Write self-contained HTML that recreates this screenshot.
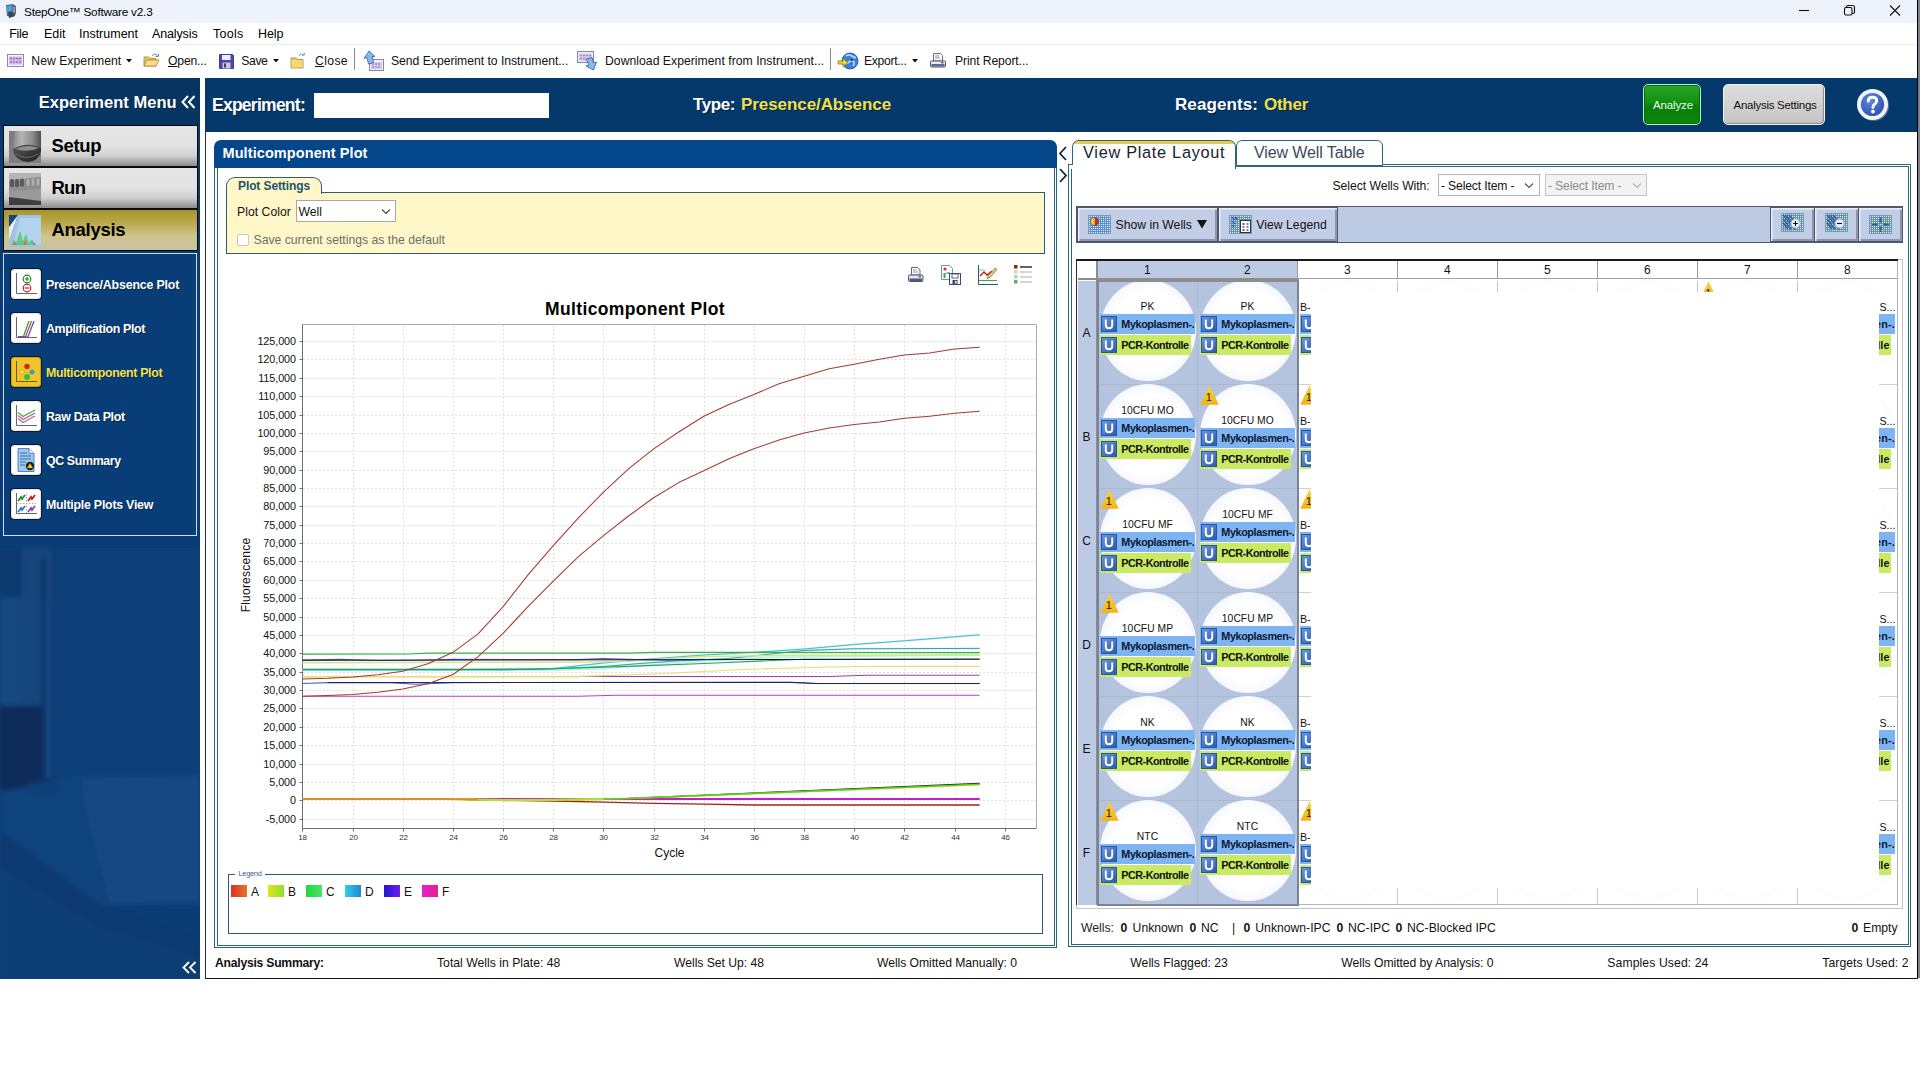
<!DOCTYPE html><html><head><meta charset="utf-8"><title>StepOne Software v2.3</title><style>*{box-sizing:border-box;margin:0;padding:0}
html,body{width:1920px;height:1080px;background:#fff;overflow:hidden}
body{font-family:"Liberation Sans",sans-serif;font-size:12px;color:#000;position:relative}
.a{position:absolute}
.t{position:absolute;white-space:nowrap}
svg{position:absolute;overflow:visible}
#titlebar{left:0;top:0;width:1917px;height:23px;background:#eef2fa}
#menubar{left:0;top:23px;width:1917px;height:22px;background:#fff;border-bottom:1px solid #ececec}
#toolbar{left:0;top:45px;width:1917px;height:33px;background:#fff}
#winR{left:1917px;top:0;width:1px;height:979px;background:#000}
#winR2{left:1918px;top:0;width:2px;height:978px;background:#7d8290}
#winB{left:205px;top:978px;width:1713px;height:1px;background:#111}
#left{left:0;top:78px;width:200px;height:901px;background:#0a3b70;overflow:hidden}
#band{left:205px;top:78px;width:1712px;height:54px;background:#05386b}
.navbtn{left:2.5px;width:195px;height:42px;border:1px solid #0a0a0a;background:linear-gradient(#e6e6e6 0%,#e3e3e3 50%,#cfcfcf 75%,#8a8a8a 100%)}
.navbtn.sel{background:linear-gradient(#a8952e 0%,#b8a748 30%,#cfc48c 65%,#c9c3a6 100%)}
.sh{text-shadow:1px 1px 0 rgba(0,0,0,.38)}
#mainL{left:205px;top:132px;width:1px;height:847px;background:#22303c}
</style></head><body>
<div class="a" id="titlebar"></div><div class="a" id="menubar"></div><div class="a" id="toolbar"></div>
<svg style="left:4px;top:3px" width="14" height="16" viewBox="0 0 14 16"><path d="M2 2 L9 1 L12 3 L12 11 L9 14 L3 13 Z" fill="#5a6a80"/><path d="M3 3 L8 2.5 L8 8 L3 8.5Z" fill="#4aa0e0"/><path d="M4 9 L10 9 L11 13 L5 15Z" fill="#3a4658"/><rect x="9" y="4" width="2" height="6" fill="#8a96a8"/></svg>
<div class="t " style="top:1.50px;height:20px;line-height:20px;font-size:11.8px;color:#000;letter-spacing:-0.242px;left:24px;">StepOne™ Software v2.3</div>
<svg style="left:1795px;top:3px" width="110" height="16" viewBox="0 0 110 16" fill="none" stroke="#111" stroke-width="1.1">
<path d="M4 7.5 H14"/>
<rect x="49.500" y="4.500" width="7.500" height="7.500" rx="1.500"/><path d="M51.500 4.500 V4 Q51.500 2.500 53 2.500 H57.500 Q59.500 2.500 59.500 4.500 V9 Q59.500 10.500 58 10.500 H57"/>
<path d="M95 2.500 L105 12.500 M105 2.500 L95 12.500"/></svg>
<div class="t " style="top:23.50px;height:20px;line-height:20px;font-size:12.5px;color:#000;letter-spacing:-0.261px;left:9.2px;">File</div>
<div class="t " style="top:23.50px;height:20px;line-height:20px;font-size:12.5px;color:#000;letter-spacing:-0.06px;left:44px;">Edit</div>
<div class="t " style="top:23.50px;height:20px;line-height:20px;font-size:12.5px;color:#000;letter-spacing:-0.006px;left:79px;">Instrument</div>
<div class="t " style="top:23.50px;height:20px;line-height:20px;font-size:12.5px;color:#000;letter-spacing:-0.131px;left:152px;">Analysis</div>
<div class="t " style="top:23.50px;height:20px;line-height:20px;font-size:12.5px;color:#000;letter-spacing:0.263px;left:213px;">Tools</div>
<div class="t " style="top:23.50px;height:20px;line-height:20px;font-size:12.5px;color:#000;letter-spacing:-0.053px;left:258px;">Help</div>
<div class="t " style="top:51.00px;height:20px;line-height:20px;font-size:12.2px;color:#111;letter-spacing:0.036px;left:31.3px;">New Experiment</div>
<div class="t " style="top:51.00px;height:20px;line-height:20px;font-size:12.2px;color:#111;letter-spacing:-0.187px;left:168px;"><u>O</u>pen...</div>
<div class="t " style="top:51.00px;height:20px;line-height:20px;font-size:12.2px;color:#111;letter-spacing:-0.402px;left:241.3px;">Save</div>
<div class="t " style="top:51.00px;height:20px;line-height:20px;font-size:12.2px;color:#111;letter-spacing:0.362px;left:315px;"><u>C</u>lose</div>
<div class="t " style="top:51.00px;height:20px;line-height:20px;font-size:12.2px;color:#111;letter-spacing:-0.026px;left:391px;">Send Experiment to Instrument...</div>
<div class="t " style="top:51.00px;height:20px;line-height:20px;font-size:12.2px;color:#111;letter-spacing:0.031px;left:605px;">Download Experiment from Instrument...</div>
<div class="t " style="top:51.00px;height:20px;line-height:20px;font-size:12.2px;color:#111;letter-spacing:-0.325px;left:864px;">Export...</div>
<div class="t " style="top:51.00px;height:20px;line-height:20px;font-size:12.2px;color:#111;letter-spacing:-0.117px;left:955px;">Print Report...</div>
<svg style="left:126px;top:59px" width="6" height="4"><path d="M0 0H6L3 3.500Z" fill="#111"/></svg>
<svg style="left:273px;top:59px" width="6" height="4"><path d="M0 0H6L3 3.500Z" fill="#111"/></svg>
<svg style="left:912px;top:59px" width="6" height="4"><path d="M0 0H6L3 3.500Z" fill="#111"/></svg>
<div class="a" style="left:354px;top:48px;width:1px;height:22px;background:#8a8a8a"></div>
<div class="a" style="left:830px;top:48px;width:1px;height:22px;background:#8a8a8a"></div>
<svg style="left:7px;top:54px" width="18" height="14" viewBox="0 0 18 14"><rect x=".5" y=".5" width="16" height="12" fill="#f4f4fa" stroke="#8a8fa0"/><rect x="2" y="2.500" width="13" height="8" fill="#cdb8e0"/><g fill="#7a4ab0"><circle cx="4" cy="4.500" r=".8"/><circle cx="7" cy="4.500" r=".8"/><circle cx="10" cy="4.500" r=".8"/><circle cx="13" cy="4.500" r=".8"/><circle cx="4" cy="8" r=".8"/><circle cx="7" cy="8" r=".8"/><circle cx="10" cy="8" r=".8"/><circle cx="13" cy="8" r=".8"/></g></svg>
<svg style="left:143px;top:52px" width="17" height="16" viewBox="0 0 17 16"><path d="M1 5h5l1 1.500h6V14H1z" fill="#e8c868" stroke="#a8862a" stroke-width=".8"/><path d="M1 14l2.500-6H16l-3 6z" fill="#f6dc88" stroke="#a8862a" stroke-width=".8"/><path d="M9 3.500q3-3 5.500 0" fill="none" stroke="#7a8aa0" stroke-width="1"/><path d="M15.500 1.500v3h-3" fill="none" stroke="#7a8aa0" stroke-width="1"/></svg>
<svg style="left:219px;top:54px" width="15" height="15" viewBox="0 0 15 15"><path d="M.5.5h13l1 1v13H.5z" fill="#4a48b0" stroke="#2a2870" stroke-width=".8"/><rect x="3" y="1" width="8.500" height="5" fill="#eef"/><rect x="3.500" y="8.500" width="8" height="6" fill="#c8c8d8"/><rect x="5" y="9.500" width="2" height="4" fill="#3a3a80"/></svg>
<svg style="left:290px;top:52px" width="16" height="17" viewBox="0 0 16 17"><path d="M1 6h5l1 1.500h6V16H1z" fill="#eccb5c" stroke="#a8862a" stroke-width=".8"/><path d="M1.500 8h11v7.500h-11z" fill="#f4d878"/><path d="M9 4q1.500-3 4.500-1.500" fill="none" stroke="#7a9ac0" stroke-width="1"/><path d="M14 .5l.5 2.500-2.500.5" fill="none" stroke="#7a9ac0" stroke-width="1"/></svg>
<svg style="left:363px;top:50px" width="22" height="22" viewBox="0 0 22 22"><rect x="6.500" y="9.500" width="14" height="11" fill="#f0f0f8" stroke="#8088a0"/><rect x="8" y="12" width="11" height="7" fill="#d8c8e8"/><g fill="#8050b0"><circle cx="10" cy="14" r=".7"/><circle cx="13" cy="14" r=".7"/><circle cx="16" cy="14" r=".7"/><circle cx="10" cy="17" r=".7"/><circle cx="13" cy="17" r=".7"/><circle cx="16" cy="17" r=".7"/></g><path d="M6 1l6 5.500h-3l1.500 6-5 1.500-1.500-6.500-3 1z" fill="#8ab8e8" stroke="#3a6aa8" stroke-width=".9"/></svg>
<svg style="left:577px;top:50px" width="23" height="23" viewBox="0 0 23 23"><rect x=".5" y="1.500" width="16" height="11" fill="#f0f0f8" stroke="#8088a0"/><rect x="2" y="3.500" width="13" height="7.500" fill="#d8c8e8"/><g fill="#8050b0"><circle cx="4" cy="5.500" r=".7"/><circle cx="7" cy="5.500" r=".7"/><circle cx="10" cy="5.500" r=".7"/><circle cx="13" cy="5.500" r=".7"/><circle cx="4" cy="8.500" r=".7"/><circle cx="7" cy="8.500" r=".7"/></g><path d="M9 9l6-1.500 1.500 5.500 3-1-3 8-7.500-4 3-1z" fill="#8ab8e8" stroke="#3a6aa8" stroke-width=".9"/></svg>
<svg style="left:838px;top:52px" width="21" height="18" viewBox="0 0 21 18"><circle cx="12" cy="9" r="8" fill="#3a80d8" stroke="#1a4a98" stroke-width=".8"/><path d="M8 4q3-2 6 0 2 2 4 1.500M7 11q2 1 4-1t5 0q1 2-1 4" fill="none" stroke="#bfe0ff" stroke-width="1.600"/><path d="M12 7l3 0-1 3z" fill="#14386e"/><path d="M0 9h5V6.500L10 10.500 5 14.500V12H0z" fill="#e8d830" stroke="#8a7a10" stroke-width=".8"/></svg>
<svg style="left:930px;top:53px" width="16" height="16" viewBox="0 0 16 16"><path d="M3.500.5h7l2 2V8h-9z" fill="#fff" stroke="#566" stroke-width=".9"/><path d="M5 3h4M5 5h5" stroke="#678" stroke-width=".8"/><rect x=".5" y="8" width="15" height="6" rx="1" fill="#e8ecf4" stroke="#445" stroke-width=".9"/><rect x="1.500" y="11" width="13" height="2.500" fill="#5a6890"/><rect x="11" y="9.300" width="2.500" height="1" fill="#333"/></svg>
<div class="a" id="winR"></div><div class="a" id="winR2"></div><div class="a" id="winB"></div><div class="a" id="mainL"></div>
<div class="a" id="left">
<svg style="left:0;top:0" width="200" height="901" viewBox="0 0 200 901">
<rect width="200" height="901" fill="#0a3d74"/>
<rect x="0" y="0" width="200" height="48" fill="#073562"/>
<rect x="0" y="48" width="200" height="130" fill="#0a3a6e"/>
<filter id="bl"><feGaussianBlur stdDeviation="2"/></filter><g filter="url(#bl)"><rect x="55" y="470" width="145" height="228" fill="#0b4079"/>
<rect x="0" y="470" width="55" height="50" fill="#0a3a6f"/>
<path d="M0 520H22V628H0Z" fill="#1d4c80" opacity=".75"/>
<path d="M22 470H52V712H22Z" fill="#1a497e" opacity=".8"/>
<path d="M41 480H46V712H41Z" fill="#0c3566" opacity=".8"/>
<path d="M0 628H42V712H0Z" fill="#072c59"/>
<path d="M28 700H58V716H28Z" fill="#0a325f"/>
<path d="M0 714L75 697H200V827H100L0 752Z" fill="#11457f" opacity=".8"/>
<path d="M82 700L200 698V822L110 827L84 724Z" fill="#194c84" opacity=".7"/>
<path d="M0 752L100 827L200 862V901H0Z" fill="#093a71"/>
<path d="M0 790L100 850L200 880V901H0Z" fill="#0a3c74"/></g>
</svg>
</div>
<div class="t sh" style="top:91.50px;height:20px;line-height:20px;font-size:16.5px;color:#fff;font-weight:bold;letter-spacing:0.032px;left:38.7px;">Experiment Menu</div>
<svg style="left:181px;top:95px" width="15" height="14" viewBox="0 0 15 14" fill="none" stroke="#fff" stroke-width="2"><path d="M7 1L1.500 7 7 13M13.500 1L8 7 13.500 13"/></svg>
<svg style="left:182px;top:961px" width="15" height="13" viewBox="0 0 15 13" fill="none" stroke="#fff" stroke-width="1.800"><path d="M7 1L1.500 6.500 7 12M13.500 1L8 6.500 13.500 12"/></svg>
<div class="a navbtn" style="top:125px"></div>
<div class="t " style="top:135.70px;height:20px;line-height:20px;font-size:18.5px;color:#000;font-weight:bold;letter-spacing:-0.318px;left:51.5px;">Setup</div>
<div class="a navbtn" style="top:167px"></div>
<div class="t " style="top:177.70px;height:20px;line-height:20px;font-size:18.5px;color:#000;font-weight:bold;letter-spacing:-0.754px;left:51.5px;">Run</div>
<div class="a navbtn sel" style="top:209px"></div>
<div class="t " style="top:219.70px;height:20px;line-height:20px;font-size:18.5px;color:#000;font-weight:bold;letter-spacing:-0.287px;left:51.5px;">Analysis</div>
<svg style="left:9px;top:130.5px" width="32" height="32" viewBox="0 0 32 32"><defs><linearGradient id="si" x1="0" y1="0" x2="1" y2="0"><stop offset="0" stop-color="#8a8a8a"/><stop offset=".3" stop-color="#b4b4b4"/><stop offset=".7" stop-color="#8c8c8c"/><stop offset="1" stop-color="#4e4e4e"/></linearGradient><linearGradient id="si2" x1="0" y1="0" x2="1" y2="1"><stop offset="0" stop-color="#5a5a5a"/><stop offset="1" stop-color="#1e1e1e"/></linearGradient></defs><rect width="32" height="32" fill="#7e7e7e"/><path d="M6 0H32V20Q30 30 19 31Q6 30 4 19Z" fill="url(#si)"/><path d="M4 18Q18 10 32 17V20Q30 30 19 31Q6 30 4 19Z" fill="url(#si2)"/><path d="M6.500 18Q18 12.500 30 17Q18 22 6.500 18Z" fill="#8e8e8e"/><path d="M7 23Q18 30 29 23" stroke="#6a6a6a" stroke-width="1" fill="none"/></svg>
<svg style="left:9px;top:172.5px" width="32" height="32" viewBox="0 0 32 32"><rect width="32" height="32" fill="#9a9a9a"/><path d="M0 0H32V4L0 8Z" fill="#b4b4b4"/><path d="M0 8L32 4V16L0 18Z" fill="#8e8e8e"/><g fill="#5a5a5a"><rect x="1" y="6" width="4" height="8" rx="1.500"/><rect x="6" y="6" width="4" height="8" rx="1.500"/><rect x="11" y="5.500" width="4" height="8" rx="1.500"/></g><g fill="#b0b0b0" stroke="#777" stroke-width=".6"><rect x="17" y="5.500" width="4" height="8" rx="1.500"/><rect x="22" y="5" width="4" height="8" rx="1.500"/><rect x="27" y="5" width="4" height="8" rx="1.500"/></g><path d="M0 24L32 28V32H0Z" fill="#3e3e3e"/></svg>
<svg style="left:9px;top:214.5px" width="32" height="32" viewBox="0 0 32 32"><rect width="32" height="32" fill="#15457c"/><path d="M9 0H32V32H0V26Z" fill="#9fc4e6"/><path d="M9 0L0 26V12Z" fill="#e9eef4"/><path d="M11 3H32V30H4Z" fill="#b4d3ee"/><path d="M2 30l3-6 2 4 4-12 3 10 3-7 3 9 3-4 3 6z" fill="#5cc878" opacity=".9"/><path d="M4 30l2-3 2 3M14 30l2-5 2 5M24 30l1-3 2 3" fill="#d06a6a"/></svg>
<div class="a" style="left:3px;top:253px;width:194px;height:283px;border:1px solid #cfe0f0;background:rgba(8,62,122,.75)"></div>
<div class="t sh" style="top:274.50px;height:20px;line-height:20px;font-size:12.4px;color:#fff;font-weight:bold;letter-spacing:-0.179px;left:45.9px;">Presence/Absence Plot</div>
<div class="a" style="left:11px;top:269px;width:30px;height:30px;border-radius:3px;background:#fff;box-shadow:0 0 0 1px #0b1a2e;border:1px solid #e4e4e4"></div>
<div class="t sh" style="top:318.50px;height:20px;line-height:20px;font-size:12.4px;color:#fff;font-weight:bold;letter-spacing:-0.339px;left:45.9px;">Amplification Plot</div>
<div class="a" style="left:11px;top:313px;width:30px;height:30px;border-radius:3px;background:#fff;box-shadow:0 0 0 1px #0b1a2e;border:1px solid #e4e4e4"></div>
<div class="t sh" style="top:362.50px;height:20px;line-height:20px;font-size:12.4px;color:#f2e24a;font-weight:bold;letter-spacing:-0.322px;left:45.9px;">Multicomponent Plot</div>
<div class="a" style="left:11px;top:357px;width:30px;height:30px;border-radius:3px;background:#f0c42a;box-shadow:0 0 0 1px #0b1a2e;border:1px solid #c9a21a"></div>
<div class="t sh" style="top:406.50px;height:20px;line-height:20px;font-size:12.4px;color:#fff;font-weight:bold;letter-spacing:-0.276px;left:45.9px;">Raw Data Plot</div>
<div class="a" style="left:11px;top:401px;width:30px;height:30px;border-radius:3px;background:#fff;box-shadow:0 0 0 1px #0b1a2e;border:1px solid #e4e4e4"></div>
<div class="t sh" style="top:450.50px;height:20px;line-height:20px;font-size:12.4px;color:#fff;font-weight:bold;letter-spacing:-0.356px;left:45.9px;">QC Summary</div>
<div class="a" style="left:11px;top:445px;width:30px;height:30px;border-radius:3px;background:#fff;box-shadow:0 0 0 1px #0b1a2e;border:1px solid #e4e4e4"></div>
<div class="t sh" style="top:494.50px;height:20px;line-height:20px;font-size:12.4px;color:#fff;font-weight:bold;letter-spacing:-0.252px;left:45.9px;">Multiple Plots View</div>
<div class="a" style="left:11px;top:489px;width:30px;height:30px;border-radius:3px;background:#fff;box-shadow:0 0 0 1px #0b1a2e;border:1px solid #e4e4e4"></div>
<svg style="left:13px;top:271px" width="26" height="26" viewBox="0 0 26 26"><path d="M3.500 2V22.500H24" fill="none" stroke="#666" stroke-width="1"/><circle cx="14" cy="8" r="3.800" fill="none" stroke="#1a8a2a" stroke-width="1.200"/><path d="M11.800 8h4.400M14 5.800v4.400" stroke="#1a8a2a" stroke-width="1.200"/><circle cx="14" cy="17" r="3.800" fill="none" stroke="#c02020" stroke-width="1.200"/><path d="M11.800 17h4.400" stroke="#c02020" stroke-width="1.200"/></svg>
<svg style="left:13px;top:315px" width="26" height="26" viewBox="0 0 26 26"><path d="M3.500 2V22.500H24" fill="none" stroke="#666" stroke-width="1"/><path d="M5 21.500H10.500L16 6" fill="none" stroke="#2a9a3a" stroke-width="1.200"/><path d="M5 21.800H12.500L18.500 6" fill="none" stroke="#d04040" stroke-width="1.200"/><path d="M5 22H15L21 6" fill="none" stroke="#3a50c0" stroke-width="1.200"/></svg>
<svg style="left:13px;top:359px" width="26" height="26" viewBox="0 0 26 26"><path d="M3.500 2V22.500H24" fill="none" stroke="#6a5a10" stroke-width="1"/><circle cx="14" cy="7.500" r="2.700" fill="#d02818"/><path d="M9 10.300L11.700 13 9 15.700 6.300 13Z" fill="#f6e84a" stroke="#a89010" stroke-width=".7"/><circle cx="19" cy="13" r="2.500" fill="#38a0b0"/><circle cx="14" cy="18" r="2.900" fill="#34c034"/></svg>
<svg style="left:13px;top:403px" width="26" height="26" viewBox="0 0 26 26"><path d="M3.500 2V22.500H24" fill="none" stroke="#666" stroke-width="1"/><path d="M5 9.500L10 13.500 22 7" fill="none" stroke="#3aaa4a" stroke-width="1.200"/><path d="M5 12.500L10 16.500 22 10" fill="none" stroke="#d85070" stroke-width="1.200"/><path d="M5 15.500L10 19.500 22 13" fill="none" stroke="#9a70c0" stroke-width="1.200"/></svg>
<svg style="left:13px;top:447px" width="26" height="26" viewBox="0 0 26 26"><path d="M5 1.500H16L21 6.500V24.500H5Z" fill="#9ec8f0" stroke="#4a78b0" stroke-width=".9"/><path d="M16 1.500V6.500H21" fill="#d8ecff" stroke="#4a78b0" stroke-width=".8"/><path d="M7 6h7M7 9h11M7 12h11M7 15h6M7 18h5" stroke="#3a68a8" stroke-width="1"/><circle cx="17" cy="19" r="4.200" fill="#222"/><path d="M17 16.300L19.800 21H14.200Z" fill="#f0d020"/></svg>
<svg style="left:13px;top:491px" width="26" height="26" viewBox="0 0 26 26"><path d="M3.500 2V22.500H24" fill="none" stroke="#666" stroke-width="1"/><path d="M13.500 3V22M4 12.500H23" stroke="#999" stroke-width=".8" stroke-dasharray="1.500 1.500"/><path d="M5 10l3-4 1 2 3-4" fill="none" stroke="#2a8a3a" stroke-width="1.800"/><path d="M15 10l3-4 1 2 3-4" fill="none" stroke="#b82020" stroke-width="1.800"/><path d="M5 21l3-4 1 2 3-4" fill="none" stroke="#2a7ab8" stroke-width="1.800"/><path d="M15 21l3-4 1 2 3-4" fill="none" stroke="#8a40b0" stroke-width="1.800"/></svg>
<div class="a" id="band"></div>
<div class="t sh" style="top:95.20px;height:20px;line-height:20px;font-size:17.5px;color:#fff;font-weight:bold;letter-spacing:-0.74px;left:212px;">Experiment:</div>
<div class="a" style="left:314px;top:93px;width:235px;height:25px;background:#fff"></div>
<div class="t sh" style="top:95.20px;height:20px;line-height:20px;font-size:17px;color:#fff;font-weight:bold;letter-spacing:-0.414px;left:693px;">Type:</div>
<div class="t sh" style="top:95.20px;height:20px;line-height:20px;font-size:17px;color:#f3e04a;font-weight:bold;letter-spacing:-0.074px;left:741px;">Presence/Absence</div>
<div class="t sh" style="top:95.20px;height:20px;line-height:20px;font-size:17px;color:#fff;font-weight:bold;letter-spacing:0.092px;left:1175px;">Reagents:</div>
<div class="t sh" style="top:95.20px;height:20px;line-height:20px;font-size:17px;color:#f3e04a;font-weight:bold;letter-spacing:-0.267px;left:1264px;">Other</div>
<div class="a" style="left:1643px;top:84px;width:58px;height:41px;border-radius:5px;border:1px solid #b8f0c0;background:linear-gradient(#2aa62a 0%,#119011 45%,#0a7f0a 55%,#0b860b 100%);box-shadow:inset 0 0 0 1px #0a6a0a"></div>
<div class="t " style="top:95.00px;height:20px;line-height:20px;font-size:11.5px;color:#e8ffe0;letter-spacing:-0.13px;left:1653px;">Analyze</div>
<div class="a" style="left:1723px;top:84px;width:102px;height:41px;border-radius:5px;border:1px solid #f4f4f4;background:linear-gradient(#dcdcdc 0%,#d2d2d2 50%,#c4c4c4 100%);box-shadow:inset -1px -1px 1px #8a8a8a"></div>
<div class="t " style="top:95.00px;height:20px;line-height:20px;font-size:11.5px;color:#111;letter-spacing:-0.269px;left:1733.5px;">Analysis Settings</div>
<svg style="left:1856px;top:88px" width="34" height="34" viewBox="0 0 34 34"><defs><radialGradient id="hg" cx=".4" cy=".3" r=".8"><stop offset="0" stop-color="#5f86dc"/><stop offset="1" stop-color="#2a4fb0"/></radialGradient></defs><circle cx="17.800" cy="17.800" r="15.300" fill="#8a96b4" opacity=".55"/><circle cx="16.500" cy="16.500" r="15.500" fill="#f2f4fb"/><circle cx="16.500" cy="16.500" r="11.600" fill="url(#hg)"/><path d="M12.300 13.200 Q12.300 9.200 16.500 9.200 Q20.700 9.200 20.700 12.800 Q20.700 14.800 18.600 16.200 Q16.900 17.400 16.900 19.600" fill="none" stroke="#fff" stroke-width="2.900" stroke-linecap="round"/><circle cx="16.900" cy="23.600" r="1.900" fill="#fff"/></svg>
<div class="a" style="left:214px;top:140px;width:843px;height:28px;background:#03468a;border-radius:7px 7px 0 0"></div>
<div class="t " style="top:142.50px;height:20px;line-height:20px;font-size:14.5px;color:#fff;font-weight:bold;letter-spacing:0.087px;left:222.5px;">Multicomponent Plot</div>
<div class="a" style="left:214px;top:167px;width:843px;height:781px;border:1px solid #2d6577;border-top:none"></div>
<div class="a" style="left:216.500px;top:168px;width:838px;height:778px;border:1px solid #2d6577;border-top:none"></div>
<svg style="left:1058px;top:146px" width="10" height="38" viewBox="0 0 10 38" fill="none" stroke="#0d2a45" stroke-width="1.800"><path d="M8 1L2 7.500 8 14"/><path d="M2 23L8 29.500 2 36"/></svg>
<div class="a" style="left:226px;top:192px;width:819px;height:62px;background:#fff7c8;border:1px solid #2d5f6c"></div>
<div class="a" style="left:226px;top:177px;width:96px;height:17px;background:#fff7c8;border:1px solid #2d5f6c;border-bottom:none;border-radius:9px 9px 0 0"></div>
<div class="a" style="left:227px;top:192px;width:94px;height:2px;background:#fff7c8"></div>
<div class="t " style="top:175.50px;height:20px;line-height:20px;font-size:12px;color:#1d5468;font-weight:bold;letter-spacing:-0.104px;left:238px;">Plot Settings</div>
<div class="t " style="top:201.50px;height:20px;line-height:20px;font-size:12.2px;color:#111;letter-spacing:0.043px;left:237px;">Plot Color</div>
<div class="a" style="left:296px;top:200px;width:100px;height:22px;background:#fff;border:1px solid #a8a8a8"></div>
<div class="t " style="top:201.50px;height:20px;line-height:20px;font-size:12.2px;color:#111;left:298.5px;">Well</div>
<svg style="left:381px;top:208px" width="10" height="7" viewBox="0 0 10 7" fill="none" stroke="#444" stroke-width="1.100"><path d="M1 1.500L5 5.500 9 1.500"/></svg>
<div class="a" style="left:236.500px;top:233.500px;width:12px;height:12px;background:#fdfdfd;border:1px solid #c8c8c8;border-radius:2px"></div>
<div class="t " style="top:229.50px;height:20px;line-height:20px;font-size:12.2px;color:#6e6e6e;letter-spacing:0.008px;left:253.5px;">Save current settings as the default</div>
<svg style="left:908px;top:267px" width="16" height="16" viewBox="0 0 16 16"><path d="M3.500.5h6l2.500 2.500V8h-8.500z" fill="#fff" stroke="#4a5a7a" stroke-width=".9"/><path d="M5 3h3.500M5 5h5" stroke="#678" stroke-width=".8"/><rect x=".5" y="8" width="14.500" height="6.500" rx="1" fill="#e4e8f2" stroke="#3a4668" stroke-width=".9"/><rect x="1.500" y="11.500" width="12.500" height="2.500" fill="#4a5888"/><rect x="10.500" y="9.300" width="2.500" height="1" fill="#333"/></svg>
<svg style="left:941px;top:265px" width="21" height="20" viewBox="0 0 21 20"><path d="M.5.5h8l3 3V14.500H.5z" fill="#fff" stroke="#5a8a9a" stroke-width=".9"/><circle cx="4" cy="4" r="1.600" fill="#d03030"/><rect x="2.500" y="8" width="2" height="5" fill="#38a848"/><rect x="5.500" y="7" width="3" height="2" fill="#8ab"/><rect x="8.500" y="8.500" width="11" height="11" fill="#f4f6fa" stroke="#3a4a78" stroke-width="1"/><rect x="11" y="9" width="6" height="4" fill="#fff" stroke="#3a4a78" stroke-width=".8"/><rect x="11.500" y="15" width="5" height="4.500" fill="#3a4a78"/><rect x="14" y="16" width="1.500" height="2.500" fill="#fff"/></svg>
<svg style="left:977px;top:265px" width="22" height="21" viewBox="0 0 22 21"><path d="M1.500 0V19.500H21" fill="none" stroke="#2a5a6a" stroke-width="1"/><path d="M2 15.500H20" stroke="#38a858" stroke-width="1"/><path d="M2 5H8" stroke="#7ab8d8" stroke-width="1"/><path d="M3 11l4-4 3 3 5-4" fill="none" stroke="#b02020" stroke-width="1.400"/><path d="M11 11l7-8 2 1.500-7 8-3 1z" fill="#e8c880" stroke="#8a6a30" stroke-width=".7"/></svg>
<svg style="left:1014px;top:265px" width="19" height="19" viewBox="0 0 19 19"><rect x="0" y="0" width="3.500" height="3.500" fill="#7a2a20"/><rect x="0" y="5" width="3.500" height="3.500" fill="#d8d8a0"/><rect x="0" y="10" width="3.500" height="3.500" fill="#a0d8d8"/><rect x="0" y="15" width="3.500" height="3.500" fill="#58b868"/><path d="M6 2H18" stroke="#222" stroke-width="1.400"/><path d="M6 7H18M6 12H18M6 17H18" stroke="#c8c8c8" stroke-width="1.400"/></svg>
<div class="t " style="top:952.80px;height:20px;line-height:20px;font-size:12.2px;color:#111;font-weight:bold;letter-spacing:-0.249px;left:215px;">Analysis Summary:</div>
<div class="t " style="top:952.80px;height:20px;line-height:20px;font-size:12.2px;color:#111;letter-spacing:0.013px;left:437px;">Total Wells in Plate: 48</div>
<div class="t " style="top:952.80px;height:20px;line-height:20px;font-size:12.2px;color:#111;letter-spacing:-0.04px;left:674px;">Wells Set Up: 48</div>
<div class="t " style="top:952.80px;height:20px;line-height:20px;font-size:12.2px;color:#111;letter-spacing:-0.059px;left:877px;">Wells Omitted Manually: 0</div>
<div class="t " style="top:952.80px;height:20px;line-height:20px;font-size:12.2px;color:#111;letter-spacing:0.016px;left:1130.3px;">Wells Flagged: 23</div>
<div class="t " style="top:952.80px;height:20px;line-height:20px;font-size:12.2px;color:#111;letter-spacing:-0.049px;left:1341.3px;">Wells Omitted by Analysis: 0</div>
<div class="t " style="top:952.80px;height:20px;line-height:20px;font-size:12.2px;color:#111;letter-spacing:0.101px;left:1607.3px;">Samples Used: 24</div>
<div class="t " style="top:952.80px;height:20px;line-height:20px;font-size:12.2px;color:#111;letter-spacing:0.058px;left:1822.3px;">Targets Used: 2</div>
<svg style="left:0;top:0" width="1100" height="960" viewBox="0 0 1100 960">
<path d="M303 819.5H1036 M303 800.5H1036 M303 782.5H1036 M303 764.5H1036 M303 745.5H1036 M303 727.5H1036 M303 708.5H1036 M303 690.5H1036 M303 672.5H1036 M303 653.5H1036 M303 635.5H1036 M303 617.5H1036 M303 598.5H1036 M303 580.5H1036 M303 561.5H1036 M303 543.5H1036 M303 525.5H1036 M303 506.5H1036 M303 488.5H1036 M303 470.5H1036 M303 451.5H1036 M303 433.5H1036 M303 415.5H1036 M303 396.5H1036 M303 378.5H1036 M303 359.5H1036 M303 341.5H1036 M353.5 325V828 M403.5 325V828 M453.5 325V828 M503.5 325V828 M553.5 325V828 M603.5 325V828 M654.5 325V828 M704.5 325V828 M754.5 325V828 M804.5 325V828 M854.5 325V828 M904.5 325V828 M955.5 325V828 M1005.5 325V828" stroke="#e0e0e0" stroke-width="1" stroke-dasharray="2 2" fill="none"/>
<path d="M302.500 324.500H1036.500V828.500" stroke="#ababab" fill="none"/>
<path d="M302.500 324.500V828.500H1036.500" stroke="#6e6e6e" fill="none"/>
<path d="M299.500 819.5H302.500 M299.500 800.5H302.500 M299.500 782.5H302.500 M299.500 764.5H302.500 M299.500 745.5H302.500 M299.500 727.5H302.500 M299.500 708.5H302.500 M299.500 690.5H302.500 M299.500 672.5H302.500 M299.500 653.5H302.500 M299.500 635.5H302.500 M299.500 617.5H302.500 M299.500 598.5H302.500 M299.500 580.5H302.500 M299.500 561.5H302.500 M299.500 543.5H302.500 M299.500 525.5H302.500 M299.500 506.5H302.500 M299.500 488.5H302.500 M299.500 470.5H302.500 M299.500 451.5H302.500 M299.500 433.5H302.500 M299.500 415.5H302.500 M299.500 396.5H302.500 M299.500 378.5H302.500 M299.500 359.5H302.500 M299.500 341.5H302.500 M302.5 828.500V831.500 M353.5 828.500V831.500 M403.5 828.500V831.500 M453.5 828.500V831.500 M503.5 828.500V831.500 M553.5 828.500V831.500 M603.5 828.500V831.500 M654.5 828.500V831.500 M704.5 828.500V831.500 M754.5 828.500V831.500 M804.5 828.500V831.500 M854.5 828.500V831.500 M904.5 828.500V831.500 M955.5 828.500V831.500 M1005.5 828.500V831.500" stroke="#6e6e6e" fill="none"/>
<path d="M302.5 799.0 L979.7 799.0" stroke="#c020c4" stroke-width="2" fill="none" opacity="1" stroke-linejoin="round"/>
<path d="M302.5 799.2 L453.0 799.2 L503.1 800.4 L553.3 801.0 L603.5 802.2 L653.6 803.4 L703.8 804.2 L753.9 805.0 L979.7 805.0" stroke="#a82018" stroke-width="1.3" fill="none" opacity="1" stroke-linejoin="round"/>
<path d="M302.5 799.1 L453.0 799.1 L503.1 800.2 L553.3 799.8 L603.5 799.1 L628.5 798.6 L979.7 783.4" stroke="#202020" stroke-width="1.5" fill="none" opacity="1" stroke-linejoin="round"/>
<path d="M302.5 799.1 L453.0 799.1 L503.1 800.2 L553.3 799.8 L603.5 799.1 L628.5 798.6 L979.7 784.8" stroke="#e8e020" stroke-width="1.5" fill="none" opacity="1" stroke-linejoin="round"/>
<path d="M302.5 799.1 L453.0 799.1 L503.1 800.2 L553.3 799.8 L603.5 799.1 L628.5 798.6 L979.7 784.2" stroke="#58d028" stroke-width="1.5" fill="none" opacity="1" stroke-linejoin="round"/>
<path d="M453.0 799.1 L503.1 800.2 L553.3 799.8 L603.5 799.1" stroke="#b4e030" stroke-width="2.2" fill="none" opacity="1" stroke-linejoin="round"/>
<path d="M302.5 799.1 L458.0 799.1 L478.1 799.6" stroke="#e88a18" stroke-width="1.9" fill="none" opacity="1" stroke-linejoin="round"/>
<path d="M302.5 696.2 L578.4 696.2 L616.0 695.3 L979.7 695.3" stroke="#c43cc0" stroke-width="1.1" fill="none" opacity="1" stroke-linejoin="round"/>
<path d="M302.5 683.5 L327.6 682.6 L390.3 682.6 L415.4 684.2 L453.0 682.6 L791.6 682.4 L816.6 683.5 L979.7 683.5" stroke="#4c62d0" stroke-width="1.1" fill="none" opacity="1" stroke-linejoin="round"/>
<path d="M327.6 682.6 L791.6 682.4 L816.6 683.5 L979.7 683.5" stroke="#20204e" stroke-width="1.0" fill="none" opacity="1" stroke-linejoin="round"/>
<path d="M302.5 676.8 L578.4 676.6" stroke="#e89038" stroke-width="1.1" fill="none" opacity="1" stroke-linejoin="round"/>
<path d="M302.5 676.5 L829.2 676.5 L866.8 675.3 L979.7 675.3" stroke="#a23ca2" stroke-width="1.1" fill="none" opacity="1" stroke-linejoin="round"/>
<path d="M302.5 676.6 L578.4 676.4 L653.6 674.0 L753.9 669.0 L829.2 667.0 L879.3 666.3 L979.7 666.3" stroke="#e6e070" stroke-width="1.2" fill="none" opacity="1" stroke-linejoin="round"/>
<path d="M302.5 670.0 L503.1 670.0 L553.3 668.5 L603.5 663.0 L641.1 659.7 L703.8 655.0 L753.9 652.4 L804.1 649.0 L854.3 644.5 L904.4 640.8 L979.7 634.8" stroke="#c4f6f2" stroke-width="2.2" fill="none" opacity="0.9" stroke-linejoin="round"/>
<path d="M302.5 669.6 L453.0 669.6 L553.3 668.8 L603.5 666.5 L641.1 663.4 L678.7 660.8 L728.9 658.5 L804.1 650.5 L854.3 648.8 L979.7 648.4" stroke="#c4f6f2" stroke-width="2.0" fill="none" opacity="0.9" stroke-linejoin="round"/>
<path d="M302.5 670.4 L553.3 670.0 L603.5 668.6 L653.6 664.6 L703.8 661.0 L753.9 658.0 L804.1 656.8 L854.3 656.0 L979.7 655.0" stroke="#b4f2dc" stroke-width="1.8" fill="none" opacity="0.9" stroke-linejoin="round"/>
<path d="M302.5 669.6 L453.0 669.6 L553.3 668.8 L603.5 666.5 L641.1 663.4 L678.7 660.8 L728.9 658.5 L804.1 650.5 L854.3 648.8 L979.7 648.4" stroke="#3a9cb4" stroke-width="1.0" fill="none" opacity="1" stroke-linejoin="round"/>
<path d="M302.5 670.0 L503.1 670.0 L553.3 668.5 L603.5 663.0 L641.1 659.7 L703.8 655.0 L753.9 652.4 L804.1 649.0 L854.3 644.5 L904.4 640.8 L979.7 634.8" stroke="#52b4c8" stroke-width="1.0" fill="none" opacity="1" stroke-linejoin="round"/>
<path d="M302.5 669.4 L528.2 669.4 L578.4 668.0 L641.1 665.9 L703.8 663.5 L766.5 660.8 L804.1 659.2 L979.7 659.0" stroke="#1fa45c" stroke-width="1.1" fill="none" opacity="1" stroke-linejoin="round"/>
<path d="M302.5 662.6 L578.4 662.2 L628.5 661.2 L703.8 656.5 L804.1 655.2 L979.7 655.0" stroke="#cfe98c" stroke-width="1.6" fill="none" opacity="1" stroke-linejoin="round"/>
<path d="M302.5 660.1 L340.1 659.4 L377.7 660.5 L415.4 660.3 L453.0 659.4 L578.4 659.6 L603.5 658.6 L628.5 659.2 L666.2 660.2 L703.8 659.4" stroke="#5a58c8" stroke-width="1.1" fill="none" opacity="1" stroke-linejoin="round"/>
<path d="M302.5 660.3 L979.7 659.2" stroke="#14143c" stroke-width="1.1" fill="none" opacity="1" stroke-linejoin="round"/>
<path d="M302.5 654.1 L407.8 654.0 L427.9 653.2 L628.5 653.1 L653.6 652.4 L979.7 652.6" stroke="#35b445" stroke-width="1.2" fill="none" opacity="1" stroke-linejoin="round"/>
<path d="M302.5 679.0 L327.6 678.3 L352.7 677.0 L377.7 674.8 L402.8 671.3 L427.9 663.8 L453.0 652.3 L478.1 633.8 L503.1 606.6 L528.2 574.6 L553.3 545.6 L578.4 517.8 L603.5 492.2 L628.5 468.9 L653.6 448.9 L678.7 432.0 L703.8 416.3 L728.9 404.5 L753.9 394.5 L779.0 383.8 L804.1 376.3 L829.2 368.8 L854.3 364.3 L879.3 359.3 L904.4 355.0 L929.5 353.0 L954.6 349.0 L979.7 347.3" stroke="#a43a30" stroke-width="1.05" fill="none" opacity="1" stroke-linejoin="round"/>
<path d="M302.5 696.2 L327.6 695.6 L352.7 694.5 L377.7 692.2 L402.8 689.0 L427.9 683.8 L453.0 674.5 L478.1 656.6 L503.1 633.4 L528.2 606.4 L553.3 581.2 L578.4 556.7 L603.5 535.6 L628.5 516.0 L653.6 497.8 L678.7 482.6 L703.8 470.8 L728.9 458.8 L753.9 448.8 L779.0 440.0 L804.1 433.0 L829.2 428.0 L854.3 424.5 L879.3 422.0 L904.4 418.3 L929.5 416.3 L954.6 413.3 L979.7 411.3" stroke="#a43a30" stroke-width="1.05" fill="none" opacity="1" stroke-linejoin="round"/>
</svg>
<div class="t " style="top:298.50px;height:20px;line-height:20px;font-size:17.5px;color:#000;font-weight:bold;letter-spacing:0.366px;left:545px;">Multicomponent Plot</div>
<div class="t " style="top:809.30px;height:20px;line-height:20px;font-size:10.8px;color:#111;letter-spacing:-0.06px;right:1624px;">-5,000</div>
<div class="t " style="top:790.30px;height:20px;line-height:20px;font-size:10.8px;color:#111;letter-spacing:-0.06px;right:1624px;">0</div>
<div class="t " style="top:772.30px;height:20px;line-height:20px;font-size:10.8px;color:#111;letter-spacing:-0.06px;right:1624px;">5,000</div>
<div class="t " style="top:754.30px;height:20px;line-height:20px;font-size:10.8px;color:#111;letter-spacing:-0.06px;right:1624px;">10,000</div>
<div class="t " style="top:735.30px;height:20px;line-height:20px;font-size:10.8px;color:#111;letter-spacing:-0.06px;right:1624px;">15,000</div>
<div class="t " style="top:717.30px;height:20px;line-height:20px;font-size:10.8px;color:#111;letter-spacing:-0.06px;right:1624px;">20,000</div>
<div class="t " style="top:698.30px;height:20px;line-height:20px;font-size:10.8px;color:#111;letter-spacing:-0.06px;right:1624px;">25,000</div>
<div class="t " style="top:680.30px;height:20px;line-height:20px;font-size:10.8px;color:#111;letter-spacing:-0.06px;right:1624px;">30,000</div>
<div class="t " style="top:662.30px;height:20px;line-height:20px;font-size:10.8px;color:#111;letter-spacing:-0.06px;right:1624px;">35,000</div>
<div class="t " style="top:643.30px;height:20px;line-height:20px;font-size:10.8px;color:#111;letter-spacing:-0.06px;right:1624px;">40,000</div>
<div class="t " style="top:625.30px;height:20px;line-height:20px;font-size:10.8px;color:#111;letter-spacing:-0.06px;right:1624px;">45,000</div>
<div class="t " style="top:607.30px;height:20px;line-height:20px;font-size:10.8px;color:#111;letter-spacing:-0.06px;right:1624px;">50,000</div>
<div class="t " style="top:588.30px;height:20px;line-height:20px;font-size:10.8px;color:#111;letter-spacing:-0.06px;right:1624px;">55,000</div>
<div class="t " style="top:570.30px;height:20px;line-height:20px;font-size:10.8px;color:#111;letter-spacing:-0.06px;right:1624px;">60,000</div>
<div class="t " style="top:551.30px;height:20px;line-height:20px;font-size:10.8px;color:#111;letter-spacing:-0.06px;right:1624px;">65,000</div>
<div class="t " style="top:533.30px;height:20px;line-height:20px;font-size:10.8px;color:#111;letter-spacing:-0.06px;right:1624px;">70,000</div>
<div class="t " style="top:515.30px;height:20px;line-height:20px;font-size:10.8px;color:#111;letter-spacing:-0.06px;right:1624px;">75,000</div>
<div class="t " style="top:496.30px;height:20px;line-height:20px;font-size:10.8px;color:#111;letter-spacing:-0.06px;right:1624px;">80,000</div>
<div class="t " style="top:478.30px;height:20px;line-height:20px;font-size:10.8px;color:#111;letter-spacing:-0.06px;right:1624px;">85,000</div>
<div class="t " style="top:460.30px;height:20px;line-height:20px;font-size:10.8px;color:#111;letter-spacing:-0.06px;right:1624px;">90,000</div>
<div class="t " style="top:441.30px;height:20px;line-height:20px;font-size:10.8px;color:#111;letter-spacing:-0.06px;right:1624px;">95,000</div>
<div class="t " style="top:423.30px;height:20px;line-height:20px;font-size:10.8px;color:#111;letter-spacing:-0.06px;right:1624px;">100,000</div>
<div class="t " style="top:405.30px;height:20px;line-height:20px;font-size:10.8px;color:#111;letter-spacing:-0.06px;right:1624px;">105,000</div>
<div class="t " style="top:386.30px;height:20px;line-height:20px;font-size:10.8px;color:#111;letter-spacing:-0.06px;right:1624px;">110,000</div>
<div class="t " style="top:368.30px;height:20px;line-height:20px;font-size:10.8px;color:#111;letter-spacing:-0.06px;right:1624px;">115,000</div>
<div class="t " style="top:349.30px;height:20px;line-height:20px;font-size:10.8px;color:#111;letter-spacing:-0.06px;right:1624px;">120,000</div>
<div class="t " style="top:331.30px;height:20px;line-height:20px;font-size:10.8px;color:#111;letter-spacing:-0.06px;right:1624px;">125,000</div>
<div class="t " style="top:828.30px;height:20px;line-height:20px;font-size:8.0px;color:#333;letter-spacing:-0.3px;left:102.5px;width:400px;text-align:center;">18</div>
<div class="t " style="top:828.30px;height:20px;line-height:20px;font-size:8.0px;color:#333;letter-spacing:-0.3px;left:153.5px;width:400px;text-align:center;">20</div>
<div class="t " style="top:828.30px;height:20px;line-height:20px;font-size:8.0px;color:#333;letter-spacing:-0.3px;left:203.5px;width:400px;text-align:center;">22</div>
<div class="t " style="top:828.30px;height:20px;line-height:20px;font-size:8.0px;color:#333;letter-spacing:-0.3px;left:253.5px;width:400px;text-align:center;">24</div>
<div class="t " style="top:828.30px;height:20px;line-height:20px;font-size:8.0px;color:#333;letter-spacing:-0.3px;left:303.5px;width:400px;text-align:center;">26</div>
<div class="t " style="top:828.30px;height:20px;line-height:20px;font-size:8.0px;color:#333;letter-spacing:-0.3px;left:353.5px;width:400px;text-align:center;">28</div>
<div class="t " style="top:828.30px;height:20px;line-height:20px;font-size:8.0px;color:#333;letter-spacing:-0.3px;left:403.5px;width:400px;text-align:center;">30</div>
<div class="t " style="top:828.30px;height:20px;line-height:20px;font-size:8.0px;color:#333;letter-spacing:-0.3px;left:454.5px;width:400px;text-align:center;">32</div>
<div class="t " style="top:828.30px;height:20px;line-height:20px;font-size:8.0px;color:#333;letter-spacing:-0.3px;left:504.5px;width:400px;text-align:center;">34</div>
<div class="t " style="top:828.30px;height:20px;line-height:20px;font-size:8.0px;color:#333;letter-spacing:-0.3px;left:554.5px;width:400px;text-align:center;">36</div>
<div class="t " style="top:828.30px;height:20px;line-height:20px;font-size:8.0px;color:#333;letter-spacing:-0.3px;left:604.5px;width:400px;text-align:center;">38</div>
<div class="t " style="top:828.30px;height:20px;line-height:20px;font-size:8.0px;color:#333;letter-spacing:-0.3px;left:654.5px;width:400px;text-align:center;">40</div>
<div class="t " style="top:828.30px;height:20px;line-height:20px;font-size:8.0px;color:#333;letter-spacing:-0.3px;left:704.5px;width:400px;text-align:center;">42</div>
<div class="t " style="top:828.30px;height:20px;line-height:20px;font-size:8.0px;color:#333;letter-spacing:-0.3px;left:755.5px;width:400px;text-align:center;">44</div>
<div class="t " style="top:828.30px;height:20px;line-height:20px;font-size:8.0px;color:#333;letter-spacing:-0.3px;left:805.5px;width:400px;text-align:center;">46</div>
<div class="t " style="top:843.00px;height:20px;line-height:20px;font-size:12px;color:#111;left:469.5px;width:400px;text-align:center;">Cycle</div>
<div class="t" style="left:146px;top:565px;width:200px;height:20px;line-height:20px;text-align:center;font-size:12px;letter-spacing:.22px;color:#111;transform:rotate(-90deg)">Fluorescence</div>
<div class="a" style="left:228px;top:874px;width:815px;height:60px;border:1px solid #2d5a70"></div>
<div class="a" style="left:235px;top:870px;width:30px;height:8px;background:#fff"></div>
<div class="t " style="top:864.30px;height:20px;line-height:20px;font-size:7.4px;color:#3a5c94;letter-spacing:-0.283px;left:238.5px;">Legend</div>
<div class="a" style="left:231px;top:885px;width:16px;height:12px;background:linear-gradient(90deg,#e0301e,#e2742c)"></div>
<div class="t " style="top:881.50px;height:20px;line-height:20px;font-size:12px;color:#111;left:251px;">A</div>
<div class="a" style="left:268px;top:885px;width:16px;height:12px;background:linear-gradient(90deg,#dfe41c,#8ee035)"></div>
<div class="t " style="top:881.50px;height:20px;line-height:20px;font-size:12px;color:#111;left:288px;">B</div>
<div class="a" style="left:306px;top:885px;width:16px;height:12px;background:linear-gradient(90deg,#1fd83c,#4fe068)"></div>
<div class="t " style="top:881.50px;height:20px;line-height:20px;font-size:12px;color:#111;left:326px;">C</div>
<div class="a" style="left:345px;top:885px;width:16px;height:12px;background:linear-gradient(90deg,#30cfe8,#2486d2)"></div>
<div class="t " style="top:881.50px;height:20px;line-height:20px;font-size:12px;color:#111;left:365px;">D</div>
<div class="a" style="left:384px;top:885px;width:16px;height:12px;background:linear-gradient(90deg,#2418cf,#6a1fe6)"></div>
<div class="t " style="top:881.50px;height:20px;line-height:20px;font-size:12px;color:#111;left:404px;">E</div>
<div class="a" style="left:422px;top:885px;width:16px;height:12px;background:linear-gradient(90deg,#e61fd6,#e02486)"></div>
<div class="t " style="top:881.50px;height:20px;line-height:20px;font-size:12px;color:#111;left:442px;">F</div>
<div class="a" style="left:1068px;top:164px;width:843px;height:783px;border:1px solid #2d6577"></div>
<div class="a" style="left:1070.500px;top:166px;width:838px;height:779px;border:1px solid #2d6577"></div>
<div class="a" style="left:1236px;top:140px;width:147px;height:26px;background:#fff;border:1px solid #2d6577;border-radius:6px 6px 0 0"></div>
<div class="t " style="top:143.00px;height:20px;line-height:20px;font-size:16px;color:#3a4a5a;letter-spacing:-0.104px;left:1254px;">View Well Table</div>
<div class="a" style="left:1072px;top:140px;width:164px;height:29px;background:#fff;border:1px solid #2d6577;border-bottom:none;border-radius:7px 7px 0 0;overflow:hidden"><div style="height:3px;background:#e9c94e"></div></div>
<div class="a" style="left:1069px;top:165px;width:4px;height:4px;background:#fff"></div>
<div class="t " style="top:142.00px;height:20px;line-height:20px;font-size:16.3px;color:#16222e;letter-spacing:0.724px;left:1083px;">View Plate Layout</div>
<div class="t " style="top:175.50px;height:20px;line-height:20px;font-size:12.2px;color:#111;letter-spacing:-0.043px;left:1332.5px;">Select Wells With:</div>
<div class="a" style="left:1438px;top:174px;width:102px;height:21.500px;background:#fff;border:1px solid #b4b4b4"></div>
<div class="t " style="top:175.50px;height:20px;line-height:20px;font-size:12.2px;color:#111;letter-spacing:-0.161px;left:1441px;">- Select Item -</div>
<svg style="left:1524px;top:182px" width="10" height="7" viewBox="0 0 10 7" fill="none" stroke="#555" stroke-width="1.100"><path d="M1 1.500L5 5.500 9 1.500"/></svg>
<div class="a" style="left:1545px;top:174px;width:102px;height:21.500px;background:#f2f2f2;border:1px solid #c4c4c4"></div>
<div class="t " style="top:175.50px;height:20px;line-height:20px;font-size:12.2px;color:#8c8c8c;letter-spacing:-0.161px;left:1548px;">- Select Item -</div>
<svg style="left:1632px;top:182px" width="10" height="7" viewBox="0 0 10 7" fill="none" stroke="#b0b0b0" stroke-width="1.100"><path d="M1 1.500L5 5.500 9 1.500"/></svg>
<div class="a" style="left:1076px;top:206px;width:827px;height:37px;background:#bccae3;border:1px solid #4f596c;border-width:1.500px 1px 1.500px 1px"></div>
<div class="a" style="left:1076.5px;top:207px;width:141.0px;height:35px;background:#c2cee6;border:1.500px solid #4f596c;box-shadow:inset 1.500px 1.500px 0 #e8eef9,inset -2px -2px 0 #8c96ae"></div>
<div class="a" style="left:1217.5px;top:207px;width:120.0px;height:35px;background:#c2cee6;border:1.500px solid #4f596c;box-shadow:inset 1.500px 1.500px 0 #e8eef9,inset -2px -2px 0 #8c96ae"></div>
<div class="a" style="left:1770px;top:207px;width:44.5px;height:35px;background:#c2cee6;border:1.500px solid #4f596c;box-shadow:inset 1.500px 1.500px 0 #e8eef9,inset -2px -2px 0 #8c96ae"></div>
<div class="a" style="left:1813.5px;top:207px;width:45.0px;height:35px;background:#c2cee6;border:1.500px solid #4f596c;box-shadow:inset 1.500px 1.500px 0 #e8eef9,inset -2px -2px 0 #8c96ae"></div>
<div class="a" style="left:1857.5px;top:207px;width:45.5px;height:35px;background:#c2cee6;border:1.500px solid #4f596c;box-shadow:inset 1.500px 1.500px 0 #e8eef9,inset -2px -2px 0 #8c96ae"></div>
<div class="t " style="top:214.50px;height:20px;line-height:20px;font-size:12.2px;color:#111;letter-spacing:0.008px;left:1115.5px;">Show in Wells</div>
<svg style="left:1197px;top:220px" width="10" height="9"><path d="M0 0H10L5 8.500Z" fill="#111"/></svg>
<div class="t " style="top:214.50px;height:20px;line-height:20px;font-size:12.2px;color:#111;letter-spacing:0.034px;left:1256.3px;">View Legend</div>
<svg style="left:0;top:0" width="0" height="0"><defs><pattern id="dp" width="2" height="2" patternUnits="userSpaceOnUse"><rect width="2" height="2" fill="#5f8fc0"/><rect x="1" y="1" width="1" height="1" fill="#e8f2ff"/></pattern></defs></svg>
<svg style="left:1088px;top:215px" width="23" height="19" viewBox="0 0 23 19"><rect width="23" height="19" fill="url(#dp)"/><rect x=".5" y=".5" width="22" height="18" fill="none" stroke="#6f99c6"/><circle cx="6.500" cy="6.500" r="3.800" fill="#f0e8c0" stroke="#222" stroke-width="1"/><path d="M6.500 2.700A3.800 3.800 0 0 1 6.500 10.300Z" fill="#c03020"/><path d="M6.500 2.700A3.800 3.800 0 0 0 6.500 10.300Z" fill="#e8c830"/></svg>
<svg style="left:1229px;top:215px" width="23" height="19" viewBox="0 0 23 19"><rect width="23" height="19" fill="url(#dp)"/><rect x=".5" y=".5" width="22" height="18" fill="none" stroke="#6f99c6"/><path d="M3 2l3 3M6 2l3 3M3 6l3 3M3 10l2 2" stroke="#2a5a9a" stroke-width="1.300"/><rect x="11.500" y="5.500" width="10" height="12" fill="#fff" stroke="#333"/><g fill="#c84030"><rect x="13.500" y="8" width="2" height="2"/><rect x="13.500" y="14" width="2" height="2"/></g><g fill="#6a8ab0"><rect x="17.500" y="8" width="2" height="2"/><rect x="13.500" y="11" width="2" height="2"/><rect x="17.500" y="11" width="2" height="2"/><rect x="17.500" y="14" width="2" height="2"/></g></svg>
<svg style="left:1781px;top:213px" width="23" height="19" viewBox="0 0 23 19"><rect width="23" height="19" fill="url(#dp)"/><rect x=".5" y=".5" width="22" height="18" fill="none" stroke="#6f99c6"/><path d="M2 2l12 14M5 2l9 11M8 2l6 7M2 6l8 10M2 10l5 6" stroke="#2f5f92" stroke-width="1.500"/><circle cx="14.500" cy="10.500" r="4.600" fill="#eef4ff" stroke="#9ab"/><path d="M12 10.500h5M14.500 8v5" stroke="#111" stroke-width="1.200"/></svg>
<svg style="left:1825px;top:213px" width="23" height="19" viewBox="0 0 23 19"><rect width="23" height="19" fill="url(#dp)"/><rect x=".5" y=".5" width="22" height="18" fill="none" stroke="#6f99c6"/><path d="M2 2l12 14M5 2l9 11M8 2l6 7M2 6l8 10M2 10l5 6" stroke="#2f5f92" stroke-width="1.500"/><circle cx="14.500" cy="10.500" r="4.600" fill="#eef4ff" stroke="#9ab"/><path d="M12 10.500h5" stroke="#111" stroke-width="1.200"/></svg>
<svg style="left:1869px;top:215px" width="23" height="19" viewBox="0 0 23 19"><rect width="23" height="19" fill="url(#dp)"/><rect x=".5" y=".5" width="22" height="18" fill="none" stroke="#6f99c6"/><g stroke="#2f5f92" stroke-width="1.400" fill="#2f5f92"><path d="M11.500 2v5M11.500 17v-5M3 9.500h5M20 9.500h-5"/><path d="M9.500 5.500h4l-2 2.500zM9.500 13.500h4l-2-2.500zM6.500 7.500v4l2.500-2zM16.500 7.500v4l-2.500-2z" stroke="none"/></g></svg>
<div class="a" style="left:1076px;top:259px;width:827px;height:650px;border:1px solid #c4c4c4"></div><div class="a" style="left:1076px;top:259px;width:822px;height:1.500px;background:#1a1a1a"></div><div class="a" style="left:1076.300px;top:259px;width:1.200px;height:646px;background:#2a2a2a"></div>
<div class="a" style="left:1097px;top:260.500px;width:201px;height:18.500px;background:#bccae3"></div>
<div class="a" style="left:1077.500px;top:277.500px;width:221px;height:2px;background:#8d8d8d"></div><div class="a" style="left:1298px;top:277.800px;width:600px;height:1.500px;background:#a2a2a2"></div>
<div class="a" style="left:1096px;top:260.500px;width:2px;height:644px;background:#8d8d8d"></div>
<div class="a" style="left:1077.500px;top:280.500px;width:18.500px;height:624px;background:#bccae3"></div>
<div class="t " style="top:259.50px;height:20px;line-height:20px;font-size:12px;color:#111;left:947.3px;width:400px;text-align:center;">1</div>
<div class="t " style="top:259.50px;height:20px;line-height:20px;font-size:12px;color:#111;left:1047.3px;width:400px;text-align:center;">2</div>
<div class="t " style="top:259.50px;height:20px;line-height:20px;font-size:12px;color:#111;left:1147.3px;width:400px;text-align:center;">3</div>
<div class="a" style="left:1297px;top:261px;width:1px;height:18px;background:#9a9a9a"></div>
<div class="t " style="top:259.50px;height:20px;line-height:20px;font-size:12px;color:#111;left:1247.3px;width:400px;text-align:center;">4</div>
<div class="a" style="left:1397px;top:261px;width:1px;height:18px;background:#9a9a9a"></div>
<div class="t " style="top:259.50px;height:20px;line-height:20px;font-size:12px;color:#111;left:1347.3px;width:400px;text-align:center;">5</div>
<div class="a" style="left:1497px;top:261px;width:1px;height:18px;background:#9a9a9a"></div>
<div class="t " style="top:259.50px;height:20px;line-height:20px;font-size:12px;color:#111;left:1447.3px;width:400px;text-align:center;">6</div>
<div class="a" style="left:1597px;top:261px;width:1px;height:18px;background:#9a9a9a"></div>
<div class="t " style="top:259.50px;height:20px;line-height:20px;font-size:12px;color:#111;left:1547.3px;width:400px;text-align:center;">7</div>
<div class="a" style="left:1697px;top:261px;width:1px;height:18px;background:#9a9a9a"></div>
<div class="t " style="top:259.50px;height:20px;line-height:20px;font-size:12px;color:#111;left:1647.3px;width:400px;text-align:center;">8</div>
<div class="a" style="left:1797px;top:261px;width:1px;height:18px;background:#9a9a9a"></div>
<div class="a" style="left:1897px;top:261px;width:1px;height:644px;background:#b4b4b4"></div>
<div class="a" style="left:1098px;top:904px;width:800px;height:1px;background:#b4b4b4"></div>
<div class="t " style="top:322.50px;height:20px;line-height:20px;font-size:12px;color:#111;left:886.5px;width:400px;text-align:center;">A</div>
<div class="t " style="top:426.50px;height:20px;line-height:20px;font-size:12px;color:#111;left:886.5px;width:400px;text-align:center;">B</div>
<div class="t " style="top:530.50px;height:20px;line-height:20px;font-size:12px;color:#111;left:886.5px;width:400px;text-align:center;">C</div>
<div class="t " style="top:634.50px;height:20px;line-height:20px;font-size:12px;color:#111;left:886.5px;width:400px;text-align:center;">D</div>
<div class="t " style="top:738.50px;height:20px;line-height:20px;font-size:12px;color:#111;left:886.5px;width:400px;text-align:center;">E</div>
<div class="t " style="top:842.50px;height:20px;line-height:20px;font-size:12px;color:#111;left:886.5px;width:400px;text-align:center;">F</div>
<div class="a" style="left:1098px;top:280.500px;width:200px;height:624.500px;background:#b4c3de"></div>
<div class="a" style="left:1299px;top:383.5px;width:598px;height:1px;background:#d0d0d0"></div>
<div class="a" style="left:1299px;top:487.5px;width:598px;height:1px;background:#d0d0d0"></div>
<div class="a" style="left:1299px;top:591.5px;width:598px;height:1px;background:#d0d0d0"></div>
<div class="a" style="left:1299px;top:695.5px;width:598px;height:1px;background:#d0d0d0"></div>
<div class="a" style="left:1299px;top:799.5px;width:598px;height:1px;background:#d0d0d0"></div>
<div class="a" style="left:1397px;top:281px;width:1px;height:624px;background:#c6c6c6"></div>
<div class="a" style="left:1497px;top:281px;width:1px;height:624px;background:#c6c6c6"></div>
<div class="a" style="left:1597px;top:281px;width:1px;height:624px;background:#c6c6c6"></div>
<div class="a" style="left:1697px;top:281px;width:1px;height:624px;background:#c6c6c6"></div>
<div class="a" style="left:1797px;top:281px;width:1px;height:624px;background:#c6c6c6"></div>
<div class="a" style="left:1098px;top:383.5px;width:200px;height:1px;background:#aab8d2"></div>
<div class="a" style="left:1098px;top:487.5px;width:200px;height:1px;background:#aab8d2"></div>
<div class="a" style="left:1098px;top:591.5px;width:200px;height:1px;background:#aab8d2"></div>
<div class="a" style="left:1098px;top:695.5px;width:200px;height:1px;background:#aab8d2"></div>
<div class="a" style="left:1098px;top:799.5px;width:200px;height:1px;background:#aab8d2"></div>
<div class="a" style="left:1197px;top:281px;width:1px;height:624px;background:#acbad4"></div>
<svg style="left:0;top:0" width="0" height="0"><defs><linearGradient id="ug" x1="0" y1="0" x2="1" y2="1"><stop offset="0" stop-color="#6c9ae0"/><stop offset="1" stop-color="#2a56ae"/></linearGradient><linearGradient id="tg" x1="0" y1="0" x2="0" y2="1"><stop offset="0" stop-color="#fbd14a"/><stop offset="1" stop-color="#f3b312"/></linearGradient></defs></svg>
<div class="a" style="left:1099.5px;top:280.2px;width:96px;height:101px;border-radius:50%;background:radial-gradient(ellipse at 50% 50%,#ffffff 0%,#ffffff 55%,#f1f4fc 78%,#dfe6f6 100%)"></div><div class="a" style="left:1099.5px;top:313.7px;width:95.5px;height:20px;background:#7eb4f2"></div><div class="a" style="left:1099.5px;top:334.7px;width:91.5px;height:20px;background:#c9ea62"></div>
<div class="t " style="top:296.70px;height:20px;line-height:20px;font-size:10.3px;color:#111;letter-spacing:0.05px;left:947.5px;width:400px;text-align:center;">PK</div>
<svg style="left:1101.0px;top:315.7px" width="16" height="16" viewBox="0 0 16 16"><rect width="16" height="16" fill="url(#ug)"/><rect x=".5" y=".5" width="15" height="15" fill="none" stroke="#2c55a0" stroke-width="1"/><path d="M4.800 3.500V9.300Q4.800 12.300 8 12.300Q11.200 12.300 11.200 9.300V3.500" fill="none" stroke="#fff" stroke-width="1.900"/></svg>
<svg style="left:1101.0px;top:336.7px" width="16" height="16" viewBox="0 0 16 16"><rect width="16" height="16" fill="url(#ug)"/><rect x=".5" y=".5" width="15" height="15" fill="none" stroke="#2c55a0" stroke-width="1"/><path d="M4.800 3.500V9.300Q4.800 12.300 8 12.300Q11.200 12.300 11.200 9.300V3.500" fill="none" stroke="#fff" stroke-width="1.900"/></svg>
<div class="t " style="top:314.00px;height:20px;line-height:20px;font-size:10.8px;color:#0c1830;font-weight:bold;letter-spacing:-0.387px;left:1121.3px;">Mykoplasmen-.</div>
<div class="t " style="top:335.00px;height:20px;line-height:20px;font-size:10.8px;color:#111;font-weight:bold;letter-spacing:-0.507px;left:1121.3px;">PCR-Kontrolle</div>
<div class="a" style="left:1199.5px;top:280.2px;width:96px;height:101px;border-radius:50%;background:radial-gradient(ellipse at 50% 50%,#ffffff 0%,#ffffff 55%,#f1f4fc 78%,#dfe6f6 100%)"></div><div class="a" style="left:1199.5px;top:313.7px;width:95.5px;height:20px;background:#7eb4f2"></div><div class="a" style="left:1199.5px;top:334.7px;width:91.5px;height:20px;background:#c9ea62"></div>
<div class="t " style="top:296.70px;height:20px;line-height:20px;font-size:10.3px;color:#111;letter-spacing:0.05px;left:1047.5px;width:400px;text-align:center;">PK</div>
<svg style="left:1201.0px;top:315.7px" width="16" height="16" viewBox="0 0 16 16"><rect width="16" height="16" fill="url(#ug)"/><rect x=".5" y=".5" width="15" height="15" fill="none" stroke="#2c55a0" stroke-width="1"/><path d="M4.800 3.500V9.300Q4.800 12.300 8 12.300Q11.200 12.300 11.200 9.300V3.500" fill="none" stroke="#fff" stroke-width="1.900"/></svg>
<svg style="left:1201.0px;top:336.7px" width="16" height="16" viewBox="0 0 16 16"><rect width="16" height="16" fill="url(#ug)"/><rect x=".5" y=".5" width="15" height="15" fill="none" stroke="#2c55a0" stroke-width="1"/><path d="M4.800 3.500V9.300Q4.800 12.300 8 12.300Q11.200 12.300 11.200 9.300V3.500" fill="none" stroke="#fff" stroke-width="1.900"/></svg>
<div class="t " style="top:314.00px;height:20px;line-height:20px;font-size:10.8px;color:#0c1830;font-weight:bold;letter-spacing:-0.387px;left:1221.3px;">Mykoplasmen-.</div>
<div class="t " style="top:335.00px;height:20px;line-height:20px;font-size:10.8px;color:#111;font-weight:bold;letter-spacing:-0.507px;left:1221.3px;">PCR-Kontrolle</div>
<div class="a" style="left:1299.5px;top:280.2px;width:96px;height:101px;border-radius:50%;background:radial-gradient(ellipse at 50% 50%,#ffffff 0%,#ffffff 60%,#f7f9fd 80%,#eaeff9 100%)"></div><div class="a" style="left:1299.5px;top:313.7px;width:95.5px;height:20px;background:#7eb4f2"></div><div class="a" style="left:1299.5px;top:334.7px;width:91.5px;height:20px;background:#c9ea62"></div>
<div class="t " style="top:296.70px;height:20px;line-height:20px;font-size:10.6px;color:#111;left:1300.0px;">B-</div>
<svg style="left:1301.0px;top:315.7px" width="16" height="16" viewBox="0 0 16 16"><rect width="16" height="16" fill="url(#ug)"/><rect x=".5" y=".5" width="15" height="15" fill="none" stroke="#2c55a0" stroke-width="1"/><path d="M4.800 3.500V9.300Q4.800 12.300 8 12.300Q11.200 12.300 11.200 9.300V3.500" fill="none" stroke="#fff" stroke-width="1.900"/></svg>
<svg style="left:1301.0px;top:336.7px" width="16" height="16" viewBox="0 0 16 16"><rect width="16" height="16" fill="url(#ug)"/><rect x=".5" y=".5" width="15" height="15" fill="none" stroke="#2c55a0" stroke-width="1"/><path d="M4.800 3.500V9.300Q4.800 12.300 8 12.300Q11.200 12.300 11.200 9.300V3.500" fill="none" stroke="#fff" stroke-width="1.900"/></svg>
<div class="t " style="top:314.00px;height:20px;line-height:20px;font-size:10.8px;color:#0c1830;font-weight:bold;letter-spacing:-0.387px;left:1321.3px;">Mykoplasmen-.</div>
<div class="t " style="top:335.00px;height:20px;line-height:20px;font-size:10.8px;color:#111;font-weight:bold;letter-spacing:-0.507px;left:1321.3px;">PCR-Kontrolle</div>
<div class="a" style="left:1399.5px;top:280.2px;width:96px;height:101px;border-radius:50%;background:radial-gradient(ellipse at 50% 50%,#ffffff 0%,#ffffff 60%,#f7f9fd 80%,#eaeff9 100%)"></div>
<div class="a" style="left:1499.5px;top:280.2px;width:96px;height:101px;border-radius:50%;background:radial-gradient(ellipse at 50% 50%,#ffffff 0%,#ffffff 60%,#f7f9fd 80%,#eaeff9 100%)"></div>
<div class="a" style="left:1599.5px;top:280.2px;width:96px;height:101px;border-radius:50%;background:radial-gradient(ellipse at 50% 50%,#ffffff 0%,#ffffff 60%,#f7f9fd 80%,#eaeff9 100%)"></div>
<div class="a" style="left:1699.5px;top:280.2px;width:96px;height:101px;border-radius:50%;background:radial-gradient(ellipse at 50% 50%,#ffffff 0%,#ffffff 60%,#f7f9fd 80%,#eaeff9 100%)"></div>
<div class="a" style="left:1799.5px;top:280.2px;width:96px;height:101px;border-radius:50%;background:radial-gradient(ellipse at 50% 50%,#ffffff 0%,#ffffff 60%,#f7f9fd 80%,#eaeff9 100%)"></div><div class="a" style="left:1799.5px;top:313.7px;width:95.5px;height:20px;background:#7eb4f2"></div><div class="a" style="left:1799.5px;top:334.7px;width:91.5px;height:20px;background:#c9ea62"></div>
<div class="t " style="top:296.70px;height:20px;line-height:20px;font-size:10.6px;color:#111;left:1879.5px;">S...</div>
<svg style="left:1801.0px;top:315.7px" width="16" height="16" viewBox="0 0 16 16"><rect width="16" height="16" fill="url(#ug)"/><rect x=".5" y=".5" width="15" height="15" fill="none" stroke="#2c55a0" stroke-width="1"/><path d="M4.800 3.500V9.300Q4.800 12.300 8 12.300Q11.200 12.300 11.200 9.300V3.500" fill="none" stroke="#fff" stroke-width="1.900"/></svg>
<svg style="left:1801.0px;top:336.7px" width="16" height="16" viewBox="0 0 16 16"><rect width="16" height="16" fill="url(#ug)"/><rect x=".5" y=".5" width="15" height="15" fill="none" stroke="#2c55a0" stroke-width="1"/><path d="M4.800 3.500V9.300Q4.800 12.300 8 12.300Q11.200 12.300 11.200 9.300V3.500" fill="none" stroke="#fff" stroke-width="1.900"/></svg>
<div class="t " style="top:314.00px;height:20px;line-height:20px;font-size:10.8px;color:#0c1830;font-weight:bold;letter-spacing:0.15px;right:25.09999999999991px;">Mykoplasmen-.</div>
<div class="t " style="top:335.00px;height:20px;line-height:20px;font-size:10.8px;color:#111;font-weight:bold;letter-spacing:0.1px;right:30.5px;">PCR-Kontrolle</div>
<div class="a" style="left:1099.5px;top:384.2px;width:96px;height:101px;border-radius:50%;background:radial-gradient(ellipse at 50% 50%,#ffffff 0%,#ffffff 55%,#f1f4fc 78%,#dfe6f6 100%)"></div><div class="a" style="left:1099.5px;top:417.7px;width:95.5px;height:20px;background:#7eb4f2"></div><div class="a" style="left:1099.5px;top:438.7px;width:91.5px;height:20px;background:#c9ea62"></div>
<div class="t " style="top:400.70px;height:20px;line-height:20px;font-size:10.3px;color:#111;letter-spacing:0.05px;left:947.5px;width:400px;text-align:center;">10CFU MO</div>
<svg style="left:1101.0px;top:419.7px" width="16" height="16" viewBox="0 0 16 16"><rect width="16" height="16" fill="url(#ug)"/><rect x=".5" y=".5" width="15" height="15" fill="none" stroke="#2c55a0" stroke-width="1"/><path d="M4.800 3.500V9.300Q4.800 12.300 8 12.300Q11.200 12.300 11.200 9.300V3.500" fill="none" stroke="#fff" stroke-width="1.900"/></svg>
<svg style="left:1101.0px;top:440.7px" width="16" height="16" viewBox="0 0 16 16"><rect width="16" height="16" fill="url(#ug)"/><rect x=".5" y=".5" width="15" height="15" fill="none" stroke="#2c55a0" stroke-width="1"/><path d="M4.800 3.500V9.300Q4.800 12.300 8 12.300Q11.200 12.300 11.200 9.300V3.500" fill="none" stroke="#fff" stroke-width="1.900"/></svg>
<div class="t " style="top:418.00px;height:20px;line-height:20px;font-size:10.8px;color:#0c1830;font-weight:bold;letter-spacing:-0.387px;left:1121.3px;">Mykoplasmen-.</div>
<div class="t " style="top:439.00px;height:20px;line-height:20px;font-size:10.8px;color:#111;font-weight:bold;letter-spacing:-0.507px;left:1121.3px;">PCR-Kontrolle</div>
<div class="a" style="left:1199.5px;top:384.2px;width:96px;height:101px;border-radius:50%;background:radial-gradient(ellipse at 50% 50%,#ffffff 0%,#ffffff 55%,#f1f4fc 78%,#dfe6f6 100%)"></div><div class="a" style="left:1199.5px;top:427.7px;width:95.5px;height:20px;background:#7eb4f2"></div><div class="a" style="left:1199.5px;top:448.7px;width:91.5px;height:20px;background:#c9ea62"></div>
<svg style="left:1199.5px;top:385.0px" width="19" height="20" viewBox="0 0 19 20"><path d="M9.500 0.300L18.800 19.800H0.200Z" fill="url(#tg)"/></svg><div class="t " style="top:387.30px;height:20px;line-height:20px;font-size:11px;color:#222;left:1008.7px;width:400px;text-align:center;">1</div>
<div class="t " style="top:410.70px;height:20px;line-height:20px;font-size:10.3px;color:#111;letter-spacing:0.05px;left:1047.5px;width:400px;text-align:center;">10CFU MO</div>
<svg style="left:1201.0px;top:429.7px" width="16" height="16" viewBox="0 0 16 16"><rect width="16" height="16" fill="url(#ug)"/><rect x=".5" y=".5" width="15" height="15" fill="none" stroke="#2c55a0" stroke-width="1"/><path d="M4.800 3.500V9.300Q4.800 12.300 8 12.300Q11.200 12.300 11.200 9.300V3.500" fill="none" stroke="#fff" stroke-width="1.900"/></svg>
<svg style="left:1201.0px;top:450.7px" width="16" height="16" viewBox="0 0 16 16"><rect width="16" height="16" fill="url(#ug)"/><rect x=".5" y=".5" width="15" height="15" fill="none" stroke="#2c55a0" stroke-width="1"/><path d="M4.800 3.500V9.300Q4.800 12.300 8 12.300Q11.200 12.300 11.200 9.300V3.500" fill="none" stroke="#fff" stroke-width="1.900"/></svg>
<div class="t " style="top:428.00px;height:20px;line-height:20px;font-size:10.8px;color:#0c1830;font-weight:bold;letter-spacing:-0.387px;left:1221.3px;">Mykoplasmen-.</div>
<div class="t " style="top:449.00px;height:20px;line-height:20px;font-size:10.8px;color:#111;font-weight:bold;letter-spacing:-0.507px;left:1221.3px;">PCR-Kontrolle</div>
<div class="a" style="left:1299.5px;top:384.2px;width:96px;height:101px;border-radius:50%;background:radial-gradient(ellipse at 50% 50%,#ffffff 0%,#ffffff 60%,#f7f9fd 80%,#eaeff9 100%)"></div><div class="a" style="left:1299.5px;top:427.7px;width:95.5px;height:20px;background:#7eb4f2"></div><div class="a" style="left:1299.5px;top:448.7px;width:91.5px;height:20px;background:#c9ea62"></div>
<svg style="left:1299.5px;top:385.0px" width="19" height="20" viewBox="0 0 19 20"><path d="M9.500 0.300L18.800 19.800H0.200Z" fill="url(#tg)"/></svg><div class="t " style="top:387.30px;height:20px;line-height:20px;font-size:11px;color:#222;left:1108.7px;width:400px;text-align:center;">1</div>
<div class="t " style="top:410.70px;height:20px;line-height:20px;font-size:10.6px;color:#111;left:1300.0px;">B-</div>
<svg style="left:1301.0px;top:429.7px" width="16" height="16" viewBox="0 0 16 16"><rect width="16" height="16" fill="url(#ug)"/><rect x=".5" y=".5" width="15" height="15" fill="none" stroke="#2c55a0" stroke-width="1"/><path d="M4.800 3.500V9.300Q4.800 12.300 8 12.300Q11.200 12.300 11.200 9.300V3.500" fill="none" stroke="#fff" stroke-width="1.900"/></svg>
<svg style="left:1301.0px;top:450.7px" width="16" height="16" viewBox="0 0 16 16"><rect width="16" height="16" fill="url(#ug)"/><rect x=".5" y=".5" width="15" height="15" fill="none" stroke="#2c55a0" stroke-width="1"/><path d="M4.800 3.500V9.300Q4.800 12.300 8 12.300Q11.200 12.300 11.200 9.300V3.500" fill="none" stroke="#fff" stroke-width="1.900"/></svg>
<div class="t " style="top:428.00px;height:20px;line-height:20px;font-size:10.8px;color:#0c1830;font-weight:bold;letter-spacing:-0.387px;left:1321.3px;">Mykoplasmen-.</div>
<div class="t " style="top:449.00px;height:20px;line-height:20px;font-size:10.8px;color:#111;font-weight:bold;letter-spacing:-0.507px;left:1321.3px;">PCR-Kontrolle</div>
<div class="a" style="left:1399.5px;top:384.2px;width:96px;height:101px;border-radius:50%;background:radial-gradient(ellipse at 50% 50%,#ffffff 0%,#ffffff 60%,#f7f9fd 80%,#eaeff9 100%)"></div>
<div class="a" style="left:1499.5px;top:384.2px;width:96px;height:101px;border-radius:50%;background:radial-gradient(ellipse at 50% 50%,#ffffff 0%,#ffffff 60%,#f7f9fd 80%,#eaeff9 100%)"></div>
<div class="a" style="left:1599.5px;top:384.2px;width:96px;height:101px;border-radius:50%;background:radial-gradient(ellipse at 50% 50%,#ffffff 0%,#ffffff 60%,#f7f9fd 80%,#eaeff9 100%)"></div>
<div class="a" style="left:1699.5px;top:384.2px;width:96px;height:101px;border-radius:50%;background:radial-gradient(ellipse at 50% 50%,#ffffff 0%,#ffffff 60%,#f7f9fd 80%,#eaeff9 100%)"></div>
<div class="a" style="left:1799.5px;top:384.2px;width:96px;height:101px;border-radius:50%;background:radial-gradient(ellipse at 50% 50%,#ffffff 0%,#ffffff 60%,#f7f9fd 80%,#eaeff9 100%)"></div><div class="a" style="left:1799.5px;top:427.7px;width:95.5px;height:20px;background:#7eb4f2"></div><div class="a" style="left:1799.5px;top:448.7px;width:91.5px;height:20px;background:#c9ea62"></div>
<svg style="left:1799.5px;top:385.0px" width="19" height="20" viewBox="0 0 19 20"><path d="M9.500 0.300L18.800 19.800H0.200Z" fill="url(#tg)"/></svg><div class="t " style="top:387.30px;height:20px;line-height:20px;font-size:11px;color:#222;left:1608.7px;width:400px;text-align:center;">1</div>
<div class="t " style="top:410.70px;height:20px;line-height:20px;font-size:10.6px;color:#111;left:1879.5px;">S...</div>
<svg style="left:1801.0px;top:429.7px" width="16" height="16" viewBox="0 0 16 16"><rect width="16" height="16" fill="url(#ug)"/><rect x=".5" y=".5" width="15" height="15" fill="none" stroke="#2c55a0" stroke-width="1"/><path d="M4.800 3.500V9.300Q4.800 12.300 8 12.300Q11.200 12.300 11.200 9.300V3.500" fill="none" stroke="#fff" stroke-width="1.900"/></svg>
<svg style="left:1801.0px;top:450.7px" width="16" height="16" viewBox="0 0 16 16"><rect width="16" height="16" fill="url(#ug)"/><rect x=".5" y=".5" width="15" height="15" fill="none" stroke="#2c55a0" stroke-width="1"/><path d="M4.800 3.500V9.300Q4.800 12.300 8 12.300Q11.200 12.300 11.200 9.300V3.500" fill="none" stroke="#fff" stroke-width="1.900"/></svg>
<div class="t " style="top:428.00px;height:20px;line-height:20px;font-size:10.8px;color:#0c1830;font-weight:bold;letter-spacing:0.15px;right:25.09999999999991px;">Mykoplasmen-.</div>
<div class="t " style="top:449.00px;height:20px;line-height:20px;font-size:10.8px;color:#111;font-weight:bold;letter-spacing:0.1px;right:30.5px;">PCR-Kontrolle</div>
<div class="a" style="left:1099.5px;top:488.2px;width:96px;height:101px;border-radius:50%;background:radial-gradient(ellipse at 50% 50%,#ffffff 0%,#ffffff 55%,#f1f4fc 78%,#dfe6f6 100%)"></div><div class="a" style="left:1099.5px;top:531.7px;width:95.5px;height:20px;background:#7eb4f2"></div><div class="a" style="left:1099.5px;top:552.7px;width:91.5px;height:20px;background:#c9ea62"></div>
<svg style="left:1099.5px;top:489.0px" width="19" height="20" viewBox="0 0 19 20"><path d="M9.500 0.300L18.800 19.800H0.200Z" fill="url(#tg)"/></svg><div class="t " style="top:491.30px;height:20px;line-height:20px;font-size:11px;color:#222;left:908.7px;width:400px;text-align:center;">1</div>
<div class="t " style="top:514.70px;height:20px;line-height:20px;font-size:10.3px;color:#111;letter-spacing:0.05px;left:947.5px;width:400px;text-align:center;">10CFU MF</div>
<svg style="left:1101.0px;top:533.7px" width="16" height="16" viewBox="0 0 16 16"><rect width="16" height="16" fill="url(#ug)"/><rect x=".5" y=".5" width="15" height="15" fill="none" stroke="#2c55a0" stroke-width="1"/><path d="M4.800 3.500V9.300Q4.800 12.300 8 12.300Q11.200 12.300 11.200 9.300V3.500" fill="none" stroke="#fff" stroke-width="1.900"/></svg>
<svg style="left:1101.0px;top:554.7px" width="16" height="16" viewBox="0 0 16 16"><rect width="16" height="16" fill="url(#ug)"/><rect x=".5" y=".5" width="15" height="15" fill="none" stroke="#2c55a0" stroke-width="1"/><path d="M4.800 3.500V9.300Q4.800 12.300 8 12.300Q11.200 12.300 11.200 9.300V3.500" fill="none" stroke="#fff" stroke-width="1.900"/></svg>
<div class="t " style="top:532.00px;height:20px;line-height:20px;font-size:10.8px;color:#0c1830;font-weight:bold;letter-spacing:-0.387px;left:1121.3px;">Mykoplasmen-.</div>
<div class="t " style="top:553.00px;height:20px;line-height:20px;font-size:10.8px;color:#111;font-weight:bold;letter-spacing:-0.507px;left:1121.3px;">PCR-Kontrolle</div>
<div class="a" style="left:1199.5px;top:488.2px;width:96px;height:101px;border-radius:50%;background:radial-gradient(ellipse at 50% 50%,#ffffff 0%,#ffffff 55%,#f1f4fc 78%,#dfe6f6 100%)"></div><div class="a" style="left:1199.5px;top:521.7px;width:95.5px;height:20px;background:#7eb4f2"></div><div class="a" style="left:1199.5px;top:542.7px;width:91.5px;height:20px;background:#c9ea62"></div>
<div class="t " style="top:504.70px;height:20px;line-height:20px;font-size:10.3px;color:#111;letter-spacing:0.05px;left:1047.5px;width:400px;text-align:center;">10CFU MF</div>
<svg style="left:1201.0px;top:523.7px" width="16" height="16" viewBox="0 0 16 16"><rect width="16" height="16" fill="url(#ug)"/><rect x=".5" y=".5" width="15" height="15" fill="none" stroke="#2c55a0" stroke-width="1"/><path d="M4.800 3.500V9.300Q4.800 12.300 8 12.300Q11.200 12.300 11.200 9.300V3.500" fill="none" stroke="#fff" stroke-width="1.900"/></svg>
<svg style="left:1201.0px;top:544.7px" width="16" height="16" viewBox="0 0 16 16"><rect width="16" height="16" fill="url(#ug)"/><rect x=".5" y=".5" width="15" height="15" fill="none" stroke="#2c55a0" stroke-width="1"/><path d="M4.800 3.500V9.300Q4.800 12.300 8 12.300Q11.200 12.300 11.200 9.300V3.500" fill="none" stroke="#fff" stroke-width="1.900"/></svg>
<div class="t " style="top:522.00px;height:20px;line-height:20px;font-size:10.8px;color:#0c1830;font-weight:bold;letter-spacing:-0.387px;left:1221.3px;">Mykoplasmen-.</div>
<div class="t " style="top:543.00px;height:20px;line-height:20px;font-size:10.8px;color:#111;font-weight:bold;letter-spacing:-0.507px;left:1221.3px;">PCR-Kontrolle</div>
<div class="a" style="left:1299.5px;top:488.2px;width:96px;height:101px;border-radius:50%;background:radial-gradient(ellipse at 50% 50%,#ffffff 0%,#ffffff 60%,#f7f9fd 80%,#eaeff9 100%)"></div><div class="a" style="left:1299.5px;top:531.7px;width:95.5px;height:20px;background:#7eb4f2"></div><div class="a" style="left:1299.5px;top:552.7px;width:91.5px;height:20px;background:#c9ea62"></div>
<svg style="left:1299.5px;top:489.0px" width="19" height="20" viewBox="0 0 19 20"><path d="M9.500 0.300L18.800 19.800H0.200Z" fill="url(#tg)"/></svg><div class="t " style="top:491.30px;height:20px;line-height:20px;font-size:11px;color:#222;left:1108.7px;width:400px;text-align:center;">1</div>
<div class="t " style="top:514.70px;height:20px;line-height:20px;font-size:10.6px;color:#111;left:1300.0px;">B-</div>
<svg style="left:1301.0px;top:533.7px" width="16" height="16" viewBox="0 0 16 16"><rect width="16" height="16" fill="url(#ug)"/><rect x=".5" y=".5" width="15" height="15" fill="none" stroke="#2c55a0" stroke-width="1"/><path d="M4.800 3.500V9.300Q4.800 12.300 8 12.300Q11.200 12.300 11.200 9.300V3.500" fill="none" stroke="#fff" stroke-width="1.900"/></svg>
<svg style="left:1301.0px;top:554.7px" width="16" height="16" viewBox="0 0 16 16"><rect width="16" height="16" fill="url(#ug)"/><rect x=".5" y=".5" width="15" height="15" fill="none" stroke="#2c55a0" stroke-width="1"/><path d="M4.800 3.500V9.300Q4.800 12.300 8 12.300Q11.200 12.300 11.200 9.300V3.500" fill="none" stroke="#fff" stroke-width="1.900"/></svg>
<div class="t " style="top:532.00px;height:20px;line-height:20px;font-size:10.8px;color:#0c1830;font-weight:bold;letter-spacing:-0.387px;left:1321.3px;">Mykoplasmen-.</div>
<div class="t " style="top:553.00px;height:20px;line-height:20px;font-size:10.8px;color:#111;font-weight:bold;letter-spacing:-0.507px;left:1321.3px;">PCR-Kontrolle</div>
<div class="a" style="left:1399.5px;top:488.2px;width:96px;height:101px;border-radius:50%;background:radial-gradient(ellipse at 50% 50%,#ffffff 0%,#ffffff 60%,#f7f9fd 80%,#eaeff9 100%)"></div>
<div class="a" style="left:1499.5px;top:488.2px;width:96px;height:101px;border-radius:50%;background:radial-gradient(ellipse at 50% 50%,#ffffff 0%,#ffffff 60%,#f7f9fd 80%,#eaeff9 100%)"></div>
<div class="a" style="left:1599.5px;top:488.2px;width:96px;height:101px;border-radius:50%;background:radial-gradient(ellipse at 50% 50%,#ffffff 0%,#ffffff 60%,#f7f9fd 80%,#eaeff9 100%)"></div>
<div class="a" style="left:1699.5px;top:488.2px;width:96px;height:101px;border-radius:50%;background:radial-gradient(ellipse at 50% 50%,#ffffff 0%,#ffffff 60%,#f7f9fd 80%,#eaeff9 100%)"></div>
<div class="a" style="left:1799.5px;top:488.2px;width:96px;height:101px;border-radius:50%;background:radial-gradient(ellipse at 50% 50%,#ffffff 0%,#ffffff 60%,#f7f9fd 80%,#eaeff9 100%)"></div><div class="a" style="left:1799.5px;top:531.7px;width:95.5px;height:20px;background:#7eb4f2"></div><div class="a" style="left:1799.5px;top:552.7px;width:91.5px;height:20px;background:#c9ea62"></div>
<svg style="left:1799.5px;top:489.0px" width="19" height="20" viewBox="0 0 19 20"><path d="M9.500 0.300L18.800 19.800H0.200Z" fill="url(#tg)"/></svg><div class="t " style="top:491.30px;height:20px;line-height:20px;font-size:11px;color:#222;left:1608.7px;width:400px;text-align:center;">1</div>
<div class="t " style="top:514.70px;height:20px;line-height:20px;font-size:10.6px;color:#111;left:1879.5px;">S...</div>
<svg style="left:1801.0px;top:533.7px" width="16" height="16" viewBox="0 0 16 16"><rect width="16" height="16" fill="url(#ug)"/><rect x=".5" y=".5" width="15" height="15" fill="none" stroke="#2c55a0" stroke-width="1"/><path d="M4.800 3.500V9.300Q4.800 12.300 8 12.300Q11.200 12.300 11.200 9.300V3.500" fill="none" stroke="#fff" stroke-width="1.900"/></svg>
<svg style="left:1801.0px;top:554.7px" width="16" height="16" viewBox="0 0 16 16"><rect width="16" height="16" fill="url(#ug)"/><rect x=".5" y=".5" width="15" height="15" fill="none" stroke="#2c55a0" stroke-width="1"/><path d="M4.800 3.500V9.300Q4.800 12.300 8 12.300Q11.200 12.300 11.200 9.300V3.500" fill="none" stroke="#fff" stroke-width="1.900"/></svg>
<div class="t " style="top:532.00px;height:20px;line-height:20px;font-size:10.8px;color:#0c1830;font-weight:bold;letter-spacing:0.15px;right:25.09999999999991px;">Mykoplasmen-.</div>
<div class="t " style="top:553.00px;height:20px;line-height:20px;font-size:10.8px;color:#111;font-weight:bold;letter-spacing:0.1px;right:30.5px;">PCR-Kontrolle</div>
<div class="a" style="left:1099.5px;top:592.2px;width:96px;height:101px;border-radius:50%;background:radial-gradient(ellipse at 50% 50%,#ffffff 0%,#ffffff 55%,#f1f4fc 78%,#dfe6f6 100%)"></div><div class="a" style="left:1099.5px;top:635.7px;width:95.5px;height:20px;background:#7eb4f2"></div><div class="a" style="left:1099.5px;top:656.7px;width:91.5px;height:20px;background:#c9ea62"></div>
<svg style="left:1099.5px;top:593.0px" width="19" height="20" viewBox="0 0 19 20"><path d="M9.500 0.300L18.800 19.800H0.200Z" fill="url(#tg)"/></svg><div class="t " style="top:595.30px;height:20px;line-height:20px;font-size:11px;color:#222;left:908.7px;width:400px;text-align:center;">1</div>
<div class="t " style="top:618.70px;height:20px;line-height:20px;font-size:10.3px;color:#111;letter-spacing:0.05px;left:947.5px;width:400px;text-align:center;">10CFU MP</div>
<svg style="left:1101.0px;top:637.7px" width="16" height="16" viewBox="0 0 16 16"><rect width="16" height="16" fill="url(#ug)"/><rect x=".5" y=".5" width="15" height="15" fill="none" stroke="#2c55a0" stroke-width="1"/><path d="M4.800 3.500V9.300Q4.800 12.300 8 12.300Q11.200 12.300 11.200 9.300V3.500" fill="none" stroke="#fff" stroke-width="1.900"/></svg>
<svg style="left:1101.0px;top:658.7px" width="16" height="16" viewBox="0 0 16 16"><rect width="16" height="16" fill="url(#ug)"/><rect x=".5" y=".5" width="15" height="15" fill="none" stroke="#2c55a0" stroke-width="1"/><path d="M4.800 3.500V9.300Q4.800 12.300 8 12.300Q11.200 12.300 11.200 9.300V3.500" fill="none" stroke="#fff" stroke-width="1.900"/></svg>
<div class="t " style="top:636.00px;height:20px;line-height:20px;font-size:10.8px;color:#0c1830;font-weight:bold;letter-spacing:-0.387px;left:1121.3px;">Mykoplasmen-.</div>
<div class="t " style="top:657.00px;height:20px;line-height:20px;font-size:10.8px;color:#111;font-weight:bold;letter-spacing:-0.507px;left:1121.3px;">PCR-Kontrolle</div>
<div class="a" style="left:1199.5px;top:592.2px;width:96px;height:101px;border-radius:50%;background:radial-gradient(ellipse at 50% 50%,#ffffff 0%,#ffffff 55%,#f1f4fc 78%,#dfe6f6 100%)"></div><div class="a" style="left:1199.5px;top:625.7px;width:95.5px;height:20px;background:#7eb4f2"></div><div class="a" style="left:1199.5px;top:646.7px;width:91.5px;height:20px;background:#c9ea62"></div>
<div class="t " style="top:608.70px;height:20px;line-height:20px;font-size:10.3px;color:#111;letter-spacing:0.05px;left:1047.5px;width:400px;text-align:center;">10CFU MP</div>
<svg style="left:1201.0px;top:627.7px" width="16" height="16" viewBox="0 0 16 16"><rect width="16" height="16" fill="url(#ug)"/><rect x=".5" y=".5" width="15" height="15" fill="none" stroke="#2c55a0" stroke-width="1"/><path d="M4.800 3.500V9.300Q4.800 12.300 8 12.300Q11.200 12.300 11.200 9.300V3.500" fill="none" stroke="#fff" stroke-width="1.900"/></svg>
<svg style="left:1201.0px;top:648.7px" width="16" height="16" viewBox="0 0 16 16"><rect width="16" height="16" fill="url(#ug)"/><rect x=".5" y=".5" width="15" height="15" fill="none" stroke="#2c55a0" stroke-width="1"/><path d="M4.800 3.500V9.300Q4.800 12.300 8 12.300Q11.200 12.300 11.200 9.300V3.500" fill="none" stroke="#fff" stroke-width="1.900"/></svg>
<div class="t " style="top:626.00px;height:20px;line-height:20px;font-size:10.8px;color:#0c1830;font-weight:bold;letter-spacing:-0.387px;left:1221.3px;">Mykoplasmen-.</div>
<div class="t " style="top:647.00px;height:20px;line-height:20px;font-size:10.8px;color:#111;font-weight:bold;letter-spacing:-0.507px;left:1221.3px;">PCR-Kontrolle</div>
<div class="a" style="left:1299.5px;top:592.2px;width:96px;height:101px;border-radius:50%;background:radial-gradient(ellipse at 50% 50%,#ffffff 0%,#ffffff 60%,#f7f9fd 80%,#eaeff9 100%)"></div><div class="a" style="left:1299.5px;top:625.7px;width:95.5px;height:20px;background:#7eb4f2"></div><div class="a" style="left:1299.5px;top:646.7px;width:91.5px;height:20px;background:#c9ea62"></div>
<div class="t " style="top:608.70px;height:20px;line-height:20px;font-size:10.6px;color:#111;left:1300.0px;">B-</div>
<svg style="left:1301.0px;top:627.7px" width="16" height="16" viewBox="0 0 16 16"><rect width="16" height="16" fill="url(#ug)"/><rect x=".5" y=".5" width="15" height="15" fill="none" stroke="#2c55a0" stroke-width="1"/><path d="M4.800 3.500V9.300Q4.800 12.300 8 12.300Q11.200 12.300 11.200 9.300V3.500" fill="none" stroke="#fff" stroke-width="1.900"/></svg>
<svg style="left:1301.0px;top:648.7px" width="16" height="16" viewBox="0 0 16 16"><rect width="16" height="16" fill="url(#ug)"/><rect x=".5" y=".5" width="15" height="15" fill="none" stroke="#2c55a0" stroke-width="1"/><path d="M4.800 3.500V9.300Q4.800 12.300 8 12.300Q11.200 12.300 11.200 9.300V3.500" fill="none" stroke="#fff" stroke-width="1.900"/></svg>
<div class="t " style="top:626.00px;height:20px;line-height:20px;font-size:10.8px;color:#0c1830;font-weight:bold;letter-spacing:-0.387px;left:1321.3px;">Mykoplasmen-.</div>
<div class="t " style="top:647.00px;height:20px;line-height:20px;font-size:10.8px;color:#111;font-weight:bold;letter-spacing:-0.507px;left:1321.3px;">PCR-Kontrolle</div>
<div class="a" style="left:1399.5px;top:592.2px;width:96px;height:101px;border-radius:50%;background:radial-gradient(ellipse at 50% 50%,#ffffff 0%,#ffffff 60%,#f7f9fd 80%,#eaeff9 100%)"></div>
<div class="a" style="left:1499.5px;top:592.2px;width:96px;height:101px;border-radius:50%;background:radial-gradient(ellipse at 50% 50%,#ffffff 0%,#ffffff 60%,#f7f9fd 80%,#eaeff9 100%)"></div>
<div class="a" style="left:1599.5px;top:592.2px;width:96px;height:101px;border-radius:50%;background:radial-gradient(ellipse at 50% 50%,#ffffff 0%,#ffffff 60%,#f7f9fd 80%,#eaeff9 100%)"></div>
<div class="a" style="left:1699.5px;top:592.2px;width:96px;height:101px;border-radius:50%;background:radial-gradient(ellipse at 50% 50%,#ffffff 0%,#ffffff 60%,#f7f9fd 80%,#eaeff9 100%)"></div>
<div class="a" style="left:1799.5px;top:592.2px;width:96px;height:101px;border-radius:50%;background:radial-gradient(ellipse at 50% 50%,#ffffff 0%,#ffffff 60%,#f7f9fd 80%,#eaeff9 100%)"></div><div class="a" style="left:1799.5px;top:625.7px;width:95.5px;height:20px;background:#7eb4f2"></div><div class="a" style="left:1799.5px;top:646.7px;width:91.5px;height:20px;background:#c9ea62"></div>
<div class="t " style="top:608.70px;height:20px;line-height:20px;font-size:10.6px;color:#111;left:1879.5px;">S...</div>
<svg style="left:1801.0px;top:627.7px" width="16" height="16" viewBox="0 0 16 16"><rect width="16" height="16" fill="url(#ug)"/><rect x=".5" y=".5" width="15" height="15" fill="none" stroke="#2c55a0" stroke-width="1"/><path d="M4.800 3.500V9.300Q4.800 12.300 8 12.300Q11.200 12.300 11.200 9.300V3.500" fill="none" stroke="#fff" stroke-width="1.900"/></svg>
<svg style="left:1801.0px;top:648.7px" width="16" height="16" viewBox="0 0 16 16"><rect width="16" height="16" fill="url(#ug)"/><rect x=".5" y=".5" width="15" height="15" fill="none" stroke="#2c55a0" stroke-width="1"/><path d="M4.800 3.500V9.300Q4.800 12.300 8 12.300Q11.200 12.300 11.200 9.300V3.500" fill="none" stroke="#fff" stroke-width="1.900"/></svg>
<div class="t " style="top:626.00px;height:20px;line-height:20px;font-size:10.8px;color:#0c1830;font-weight:bold;letter-spacing:0.15px;right:25.09999999999991px;">Mykoplasmen-.</div>
<div class="t " style="top:647.00px;height:20px;line-height:20px;font-size:10.8px;color:#111;font-weight:bold;letter-spacing:0.1px;right:30.5px;">PCR-Kontrolle</div>
<div class="a" style="left:1099.5px;top:696.2px;width:96px;height:101px;border-radius:50%;background:radial-gradient(ellipse at 50% 50%,#ffffff 0%,#ffffff 55%,#f1f4fc 78%,#dfe6f6 100%)"></div><div class="a" style="left:1099.5px;top:729.7px;width:95.5px;height:20px;background:#7eb4f2"></div><div class="a" style="left:1099.5px;top:750.7px;width:91.5px;height:20px;background:#c9ea62"></div>
<div class="t " style="top:712.70px;height:20px;line-height:20px;font-size:10.3px;color:#111;letter-spacing:0.05px;left:947.5px;width:400px;text-align:center;">NK</div>
<svg style="left:1101.0px;top:731.7px" width="16" height="16" viewBox="0 0 16 16"><rect width="16" height="16" fill="url(#ug)"/><rect x=".5" y=".5" width="15" height="15" fill="none" stroke="#2c55a0" stroke-width="1"/><path d="M4.800 3.500V9.300Q4.800 12.300 8 12.300Q11.200 12.300 11.200 9.300V3.500" fill="none" stroke="#fff" stroke-width="1.900"/></svg>
<svg style="left:1101.0px;top:752.7px" width="16" height="16" viewBox="0 0 16 16"><rect width="16" height="16" fill="url(#ug)"/><rect x=".5" y=".5" width="15" height="15" fill="none" stroke="#2c55a0" stroke-width="1"/><path d="M4.800 3.500V9.300Q4.800 12.300 8 12.300Q11.200 12.300 11.200 9.300V3.500" fill="none" stroke="#fff" stroke-width="1.900"/></svg>
<div class="t " style="top:730.00px;height:20px;line-height:20px;font-size:10.8px;color:#0c1830;font-weight:bold;letter-spacing:-0.387px;left:1121.3px;">Mykoplasmen-.</div>
<div class="t " style="top:751.00px;height:20px;line-height:20px;font-size:10.8px;color:#111;font-weight:bold;letter-spacing:-0.507px;left:1121.3px;">PCR-Kontrolle</div>
<div class="a" style="left:1199.5px;top:696.2px;width:96px;height:101px;border-radius:50%;background:radial-gradient(ellipse at 50% 50%,#ffffff 0%,#ffffff 55%,#f1f4fc 78%,#dfe6f6 100%)"></div><div class="a" style="left:1199.5px;top:729.7px;width:95.5px;height:20px;background:#7eb4f2"></div><div class="a" style="left:1199.5px;top:750.7px;width:91.5px;height:20px;background:#c9ea62"></div>
<div class="t " style="top:712.70px;height:20px;line-height:20px;font-size:10.3px;color:#111;letter-spacing:0.05px;left:1047.5px;width:400px;text-align:center;">NK</div>
<svg style="left:1201.0px;top:731.7px" width="16" height="16" viewBox="0 0 16 16"><rect width="16" height="16" fill="url(#ug)"/><rect x=".5" y=".5" width="15" height="15" fill="none" stroke="#2c55a0" stroke-width="1"/><path d="M4.800 3.500V9.300Q4.800 12.300 8 12.300Q11.200 12.300 11.200 9.300V3.500" fill="none" stroke="#fff" stroke-width="1.900"/></svg>
<svg style="left:1201.0px;top:752.7px" width="16" height="16" viewBox="0 0 16 16"><rect width="16" height="16" fill="url(#ug)"/><rect x=".5" y=".5" width="15" height="15" fill="none" stroke="#2c55a0" stroke-width="1"/><path d="M4.800 3.500V9.300Q4.800 12.300 8 12.300Q11.200 12.300 11.200 9.300V3.500" fill="none" stroke="#fff" stroke-width="1.900"/></svg>
<div class="t " style="top:730.00px;height:20px;line-height:20px;font-size:10.8px;color:#0c1830;font-weight:bold;letter-spacing:-0.387px;left:1221.3px;">Mykoplasmen-.</div>
<div class="t " style="top:751.00px;height:20px;line-height:20px;font-size:10.8px;color:#111;font-weight:bold;letter-spacing:-0.507px;left:1221.3px;">PCR-Kontrolle</div>
<div class="a" style="left:1299.5px;top:696.2px;width:96px;height:101px;border-radius:50%;background:radial-gradient(ellipse at 50% 50%,#ffffff 0%,#ffffff 60%,#f7f9fd 80%,#eaeff9 100%)"></div><div class="a" style="left:1299.5px;top:729.7px;width:95.5px;height:20px;background:#7eb4f2"></div><div class="a" style="left:1299.5px;top:750.7px;width:91.5px;height:20px;background:#c9ea62"></div>
<div class="t " style="top:712.70px;height:20px;line-height:20px;font-size:10.6px;color:#111;left:1300.0px;">B-</div>
<svg style="left:1301.0px;top:731.7px" width="16" height="16" viewBox="0 0 16 16"><rect width="16" height="16" fill="url(#ug)"/><rect x=".5" y=".5" width="15" height="15" fill="none" stroke="#2c55a0" stroke-width="1"/><path d="M4.800 3.500V9.300Q4.800 12.300 8 12.300Q11.200 12.300 11.200 9.300V3.500" fill="none" stroke="#fff" stroke-width="1.900"/></svg>
<svg style="left:1301.0px;top:752.7px" width="16" height="16" viewBox="0 0 16 16"><rect width="16" height="16" fill="url(#ug)"/><rect x=".5" y=".5" width="15" height="15" fill="none" stroke="#2c55a0" stroke-width="1"/><path d="M4.800 3.500V9.300Q4.800 12.300 8 12.300Q11.200 12.300 11.200 9.300V3.500" fill="none" stroke="#fff" stroke-width="1.900"/></svg>
<div class="t " style="top:730.00px;height:20px;line-height:20px;font-size:10.8px;color:#0c1830;font-weight:bold;letter-spacing:-0.387px;left:1321.3px;">Mykoplasmen-.</div>
<div class="t " style="top:751.00px;height:20px;line-height:20px;font-size:10.8px;color:#111;font-weight:bold;letter-spacing:-0.507px;left:1321.3px;">PCR-Kontrolle</div>
<div class="a" style="left:1399.5px;top:696.2px;width:96px;height:101px;border-radius:50%;background:radial-gradient(ellipse at 50% 50%,#ffffff 0%,#ffffff 60%,#f7f9fd 80%,#eaeff9 100%)"></div>
<div class="a" style="left:1499.5px;top:696.2px;width:96px;height:101px;border-radius:50%;background:radial-gradient(ellipse at 50% 50%,#ffffff 0%,#ffffff 60%,#f7f9fd 80%,#eaeff9 100%)"></div>
<div class="a" style="left:1599.5px;top:696.2px;width:96px;height:101px;border-radius:50%;background:radial-gradient(ellipse at 50% 50%,#ffffff 0%,#ffffff 60%,#f7f9fd 80%,#eaeff9 100%)"></div>
<div class="a" style="left:1699.5px;top:696.2px;width:96px;height:101px;border-radius:50%;background:radial-gradient(ellipse at 50% 50%,#ffffff 0%,#ffffff 60%,#f7f9fd 80%,#eaeff9 100%)"></div>
<div class="a" style="left:1799.5px;top:696.2px;width:96px;height:101px;border-radius:50%;background:radial-gradient(ellipse at 50% 50%,#ffffff 0%,#ffffff 60%,#f7f9fd 80%,#eaeff9 100%)"></div><div class="a" style="left:1799.5px;top:729.7px;width:95.5px;height:20px;background:#7eb4f2"></div><div class="a" style="left:1799.5px;top:750.7px;width:91.5px;height:20px;background:#c9ea62"></div>
<div class="t " style="top:712.70px;height:20px;line-height:20px;font-size:10.6px;color:#111;left:1879.5px;">S...</div>
<svg style="left:1801.0px;top:731.7px" width="16" height="16" viewBox="0 0 16 16"><rect width="16" height="16" fill="url(#ug)"/><rect x=".5" y=".5" width="15" height="15" fill="none" stroke="#2c55a0" stroke-width="1"/><path d="M4.800 3.500V9.300Q4.800 12.300 8 12.300Q11.200 12.300 11.200 9.300V3.500" fill="none" stroke="#fff" stroke-width="1.900"/></svg>
<svg style="left:1801.0px;top:752.7px" width="16" height="16" viewBox="0 0 16 16"><rect width="16" height="16" fill="url(#ug)"/><rect x=".5" y=".5" width="15" height="15" fill="none" stroke="#2c55a0" stroke-width="1"/><path d="M4.800 3.500V9.300Q4.800 12.300 8 12.300Q11.200 12.300 11.200 9.300V3.500" fill="none" stroke="#fff" stroke-width="1.900"/></svg>
<div class="t " style="top:730.00px;height:20px;line-height:20px;font-size:10.8px;color:#0c1830;font-weight:bold;letter-spacing:0.15px;right:25.09999999999991px;">Mykoplasmen-.</div>
<div class="t " style="top:751.00px;height:20px;line-height:20px;font-size:10.8px;color:#111;font-weight:bold;letter-spacing:0.1px;right:30.5px;">PCR-Kontrolle</div>
<div class="a" style="left:1099.5px;top:800.2px;width:96px;height:101px;border-radius:50%;background:radial-gradient(ellipse at 50% 50%,#ffffff 0%,#ffffff 55%,#f1f4fc 78%,#dfe6f6 100%)"></div><div class="a" style="left:1099.5px;top:843.7px;width:95.5px;height:20px;background:#7eb4f2"></div><div class="a" style="left:1099.5px;top:864.7px;width:91.5px;height:20px;background:#c9ea62"></div>
<svg style="left:1099.5px;top:801.0px" width="19" height="20" viewBox="0 0 19 20"><path d="M9.500 0.300L18.800 19.800H0.200Z" fill="url(#tg)"/></svg><div class="t " style="top:803.30px;height:20px;line-height:20px;font-size:11px;color:#222;left:908.7px;width:400px;text-align:center;">1</div>
<div class="t " style="top:826.70px;height:20px;line-height:20px;font-size:10.3px;color:#111;letter-spacing:0.05px;left:947.5px;width:400px;text-align:center;">NTC</div>
<svg style="left:1101.0px;top:845.7px" width="16" height="16" viewBox="0 0 16 16"><rect width="16" height="16" fill="url(#ug)"/><rect x=".5" y=".5" width="15" height="15" fill="none" stroke="#2c55a0" stroke-width="1"/><path d="M4.800 3.500V9.300Q4.800 12.300 8 12.300Q11.200 12.300 11.200 9.300V3.500" fill="none" stroke="#fff" stroke-width="1.900"/></svg>
<svg style="left:1101.0px;top:866.7px" width="16" height="16" viewBox="0 0 16 16"><rect width="16" height="16" fill="url(#ug)"/><rect x=".5" y=".5" width="15" height="15" fill="none" stroke="#2c55a0" stroke-width="1"/><path d="M4.800 3.500V9.300Q4.800 12.300 8 12.300Q11.200 12.300 11.200 9.300V3.500" fill="none" stroke="#fff" stroke-width="1.900"/></svg>
<div class="t " style="top:844.00px;height:20px;line-height:20px;font-size:10.8px;color:#0c1830;font-weight:bold;letter-spacing:-0.387px;left:1121.3px;">Mykoplasmen-.</div>
<div class="t " style="top:865.00px;height:20px;line-height:20px;font-size:10.8px;color:#111;font-weight:bold;letter-spacing:-0.507px;left:1121.3px;">PCR-Kontrolle</div>
<div class="a" style="left:1199.5px;top:800.2px;width:96px;height:101px;border-radius:50%;background:radial-gradient(ellipse at 50% 50%,#ffffff 0%,#ffffff 55%,#f1f4fc 78%,#dfe6f6 100%)"></div><div class="a" style="left:1199.5px;top:833.7px;width:95.5px;height:20px;background:#7eb4f2"></div><div class="a" style="left:1199.5px;top:854.7px;width:91.5px;height:20px;background:#c9ea62"></div>
<div class="t " style="top:816.70px;height:20px;line-height:20px;font-size:10.3px;color:#111;letter-spacing:0.05px;left:1047.5px;width:400px;text-align:center;">NTC</div>
<svg style="left:1201.0px;top:835.7px" width="16" height="16" viewBox="0 0 16 16"><rect width="16" height="16" fill="url(#ug)"/><rect x=".5" y=".5" width="15" height="15" fill="none" stroke="#2c55a0" stroke-width="1"/><path d="M4.800 3.500V9.300Q4.800 12.300 8 12.300Q11.200 12.300 11.200 9.300V3.500" fill="none" stroke="#fff" stroke-width="1.900"/></svg>
<svg style="left:1201.0px;top:856.7px" width="16" height="16" viewBox="0 0 16 16"><rect width="16" height="16" fill="url(#ug)"/><rect x=".5" y=".5" width="15" height="15" fill="none" stroke="#2c55a0" stroke-width="1"/><path d="M4.800 3.500V9.300Q4.800 12.300 8 12.300Q11.200 12.300 11.200 9.300V3.500" fill="none" stroke="#fff" stroke-width="1.900"/></svg>
<div class="t " style="top:834.00px;height:20px;line-height:20px;font-size:10.8px;color:#0c1830;font-weight:bold;letter-spacing:-0.387px;left:1221.3px;">Mykoplasmen-.</div>
<div class="t " style="top:855.00px;height:20px;line-height:20px;font-size:10.8px;color:#111;font-weight:bold;letter-spacing:-0.507px;left:1221.3px;">PCR-Kontrolle</div>
<div class="a" style="left:1299.5px;top:800.2px;width:96px;height:101px;border-radius:50%;background:radial-gradient(ellipse at 50% 50%,#ffffff 0%,#ffffff 60%,#f7f9fd 80%,#eaeff9 100%)"></div><div class="a" style="left:1299.5px;top:843.7px;width:95.5px;height:20px;background:#7eb4f2"></div><div class="a" style="left:1299.5px;top:864.7px;width:91.5px;height:20px;background:#c9ea62"></div>
<svg style="left:1299.5px;top:801.0px" width="19" height="20" viewBox="0 0 19 20"><path d="M9.500 0.300L18.800 19.800H0.200Z" fill="url(#tg)"/></svg><div class="t " style="top:803.30px;height:20px;line-height:20px;font-size:11px;color:#222;left:1108.7px;width:400px;text-align:center;">1</div>
<div class="t " style="top:826.70px;height:20px;line-height:20px;font-size:10.6px;color:#111;left:1300.0px;">B-</div>
<svg style="left:1301.0px;top:845.7px" width="16" height="16" viewBox="0 0 16 16"><rect width="16" height="16" fill="url(#ug)"/><rect x=".5" y=".5" width="15" height="15" fill="none" stroke="#2c55a0" stroke-width="1"/><path d="M4.800 3.500V9.300Q4.800 12.300 8 12.300Q11.200 12.300 11.200 9.300V3.500" fill="none" stroke="#fff" stroke-width="1.900"/></svg>
<svg style="left:1301.0px;top:866.7px" width="16" height="16" viewBox="0 0 16 16"><rect width="16" height="16" fill="url(#ug)"/><rect x=".5" y=".5" width="15" height="15" fill="none" stroke="#2c55a0" stroke-width="1"/><path d="M4.800 3.500V9.300Q4.800 12.300 8 12.300Q11.200 12.300 11.200 9.300V3.500" fill="none" stroke="#fff" stroke-width="1.900"/></svg>
<div class="t " style="top:844.00px;height:20px;line-height:20px;font-size:10.8px;color:#0c1830;font-weight:bold;letter-spacing:-0.387px;left:1321.3px;">Mykoplasmen-.</div>
<div class="t " style="top:865.00px;height:20px;line-height:20px;font-size:10.8px;color:#111;font-weight:bold;letter-spacing:-0.507px;left:1321.3px;">PCR-Kontrolle</div>
<div class="a" style="left:1399.5px;top:800.2px;width:96px;height:101px;border-radius:50%;background:radial-gradient(ellipse at 50% 50%,#ffffff 0%,#ffffff 60%,#f7f9fd 80%,#eaeff9 100%)"></div>
<div class="a" style="left:1499.5px;top:800.2px;width:96px;height:101px;border-radius:50%;background:radial-gradient(ellipse at 50% 50%,#ffffff 0%,#ffffff 60%,#f7f9fd 80%,#eaeff9 100%)"></div>
<div class="a" style="left:1599.5px;top:800.2px;width:96px;height:101px;border-radius:50%;background:radial-gradient(ellipse at 50% 50%,#ffffff 0%,#ffffff 60%,#f7f9fd 80%,#eaeff9 100%)"></div>
<div class="a" style="left:1699.5px;top:800.2px;width:96px;height:101px;border-radius:50%;background:radial-gradient(ellipse at 50% 50%,#ffffff 0%,#ffffff 60%,#f7f9fd 80%,#eaeff9 100%)"></div>
<div class="a" style="left:1799.5px;top:800.2px;width:96px;height:101px;border-radius:50%;background:radial-gradient(ellipse at 50% 50%,#ffffff 0%,#ffffff 60%,#f7f9fd 80%,#eaeff9 100%)"></div><div class="a" style="left:1799.5px;top:833.7px;width:95.5px;height:20px;background:#7eb4f2"></div><div class="a" style="left:1799.5px;top:854.7px;width:91.5px;height:20px;background:#c9ea62"></div>
<div class="t " style="top:816.70px;height:20px;line-height:20px;font-size:10.6px;color:#111;left:1879.5px;">S...</div>
<svg style="left:1801.0px;top:835.7px" width="16" height="16" viewBox="0 0 16 16"><rect width="16" height="16" fill="url(#ug)"/><rect x=".5" y=".5" width="15" height="15" fill="none" stroke="#2c55a0" stroke-width="1"/><path d="M4.800 3.500V9.300Q4.800 12.300 8 12.300Q11.200 12.300 11.200 9.300V3.500" fill="none" stroke="#fff" stroke-width="1.900"/></svg>
<svg style="left:1801.0px;top:856.7px" width="16" height="16" viewBox="0 0 16 16"><rect width="16" height="16" fill="url(#ug)"/><rect x=".5" y=".5" width="15" height="15" fill="none" stroke="#2c55a0" stroke-width="1"/><path d="M4.800 3.500V9.300Q4.800 12.300 8 12.300Q11.200 12.300 11.200 9.300V3.500" fill="none" stroke="#fff" stroke-width="1.900"/></svg>
<div class="t " style="top:834.00px;height:20px;line-height:20px;font-size:10.8px;color:#0c1830;font-weight:bold;letter-spacing:0.15px;right:25.09999999999991px;">Mykoplasmen-.</div>
<div class="t " style="top:855.00px;height:20px;line-height:20px;font-size:10.8px;color:#111;font-weight:bold;letter-spacing:0.1px;right:30.5px;">PCR-Kontrolle</div>
<svg style="left:1699.2px;top:281px" width="19" height="20" viewBox="0 0 19 20"><path d="M9.500 0.300L18.800 19.800H0.200Z" fill="url(#tg)"/></svg><div class="t " style="top:283.30px;height:20px;line-height:20px;font-size:11px;color:#222;left:1508.4px;width:400px;text-align:center;">1</div>
<div class="a" style="left:1097px;top:279.500px;width:202px;height:626px;border:2px solid #7b8494;border-top-color:#8d8d8d"></div>
<div class="a" style="left:1311px;top:292px;width:568px;height:596px;background:#fff"></div>
<div class="t " style="top:917.50px;height:20px;line-height:20px;font-size:12.2px;color:#222;left:1081px;">Wells:</div>
<div class="t " style="top:917.50px;height:20px;line-height:20px;font-size:12.2px;color:#111;font-weight:bold;left:1120.5px;">0</div>
<div class="t " style="top:917.50px;height:20px;line-height:20px;font-size:12.2px;color:#111;left:1132.6px;">Unknown</div>
<div class="t " style="top:917.50px;height:20px;line-height:20px;font-size:12.2px;color:#111;font-weight:bold;left:1189.4px;">0</div>
<div class="t " style="top:917.50px;height:20px;line-height:20px;font-size:12.2px;color:#111;left:1201px;">NC</div>
<div class="t " style="top:917.50px;height:20px;line-height:20px;font-size:12.2px;color:#111;left:1232px;">|</div>
<div class="t " style="top:917.50px;height:20px;line-height:20px;font-size:12.2px;color:#111;font-weight:bold;left:1243.6px;">0</div>
<div class="t " style="top:917.50px;height:20px;line-height:20px;font-size:12.2px;color:#111;left:1255.3px;">Unknown-IPC</div>
<div class="t " style="top:917.50px;height:20px;line-height:20px;font-size:12.2px;color:#111;font-weight:bold;left:1336.4px;">0</div>
<div class="t " style="top:917.50px;height:20px;line-height:20px;font-size:12.2px;color:#111;left:1348px;">NC-IPC</div>
<div class="t " style="top:917.50px;height:20px;line-height:20px;font-size:12.2px;color:#111;font-weight:bold;left:1395.5px;">0</div>
<div class="t " style="top:917.50px;height:20px;line-height:20px;font-size:12.2px;color:#111;left:1407px;">NC-Blocked IPC</div>
<div class="t " style="top:917.50px;height:20px;line-height:20px;font-size:12.2px;color:#111;font-weight:bold;left:1851.5px;">0</div>
<div class="t " style="top:917.50px;height:20px;line-height:20px;font-size:12.2px;color:#111;left:1863px;">Empty</div>
</body></html>
